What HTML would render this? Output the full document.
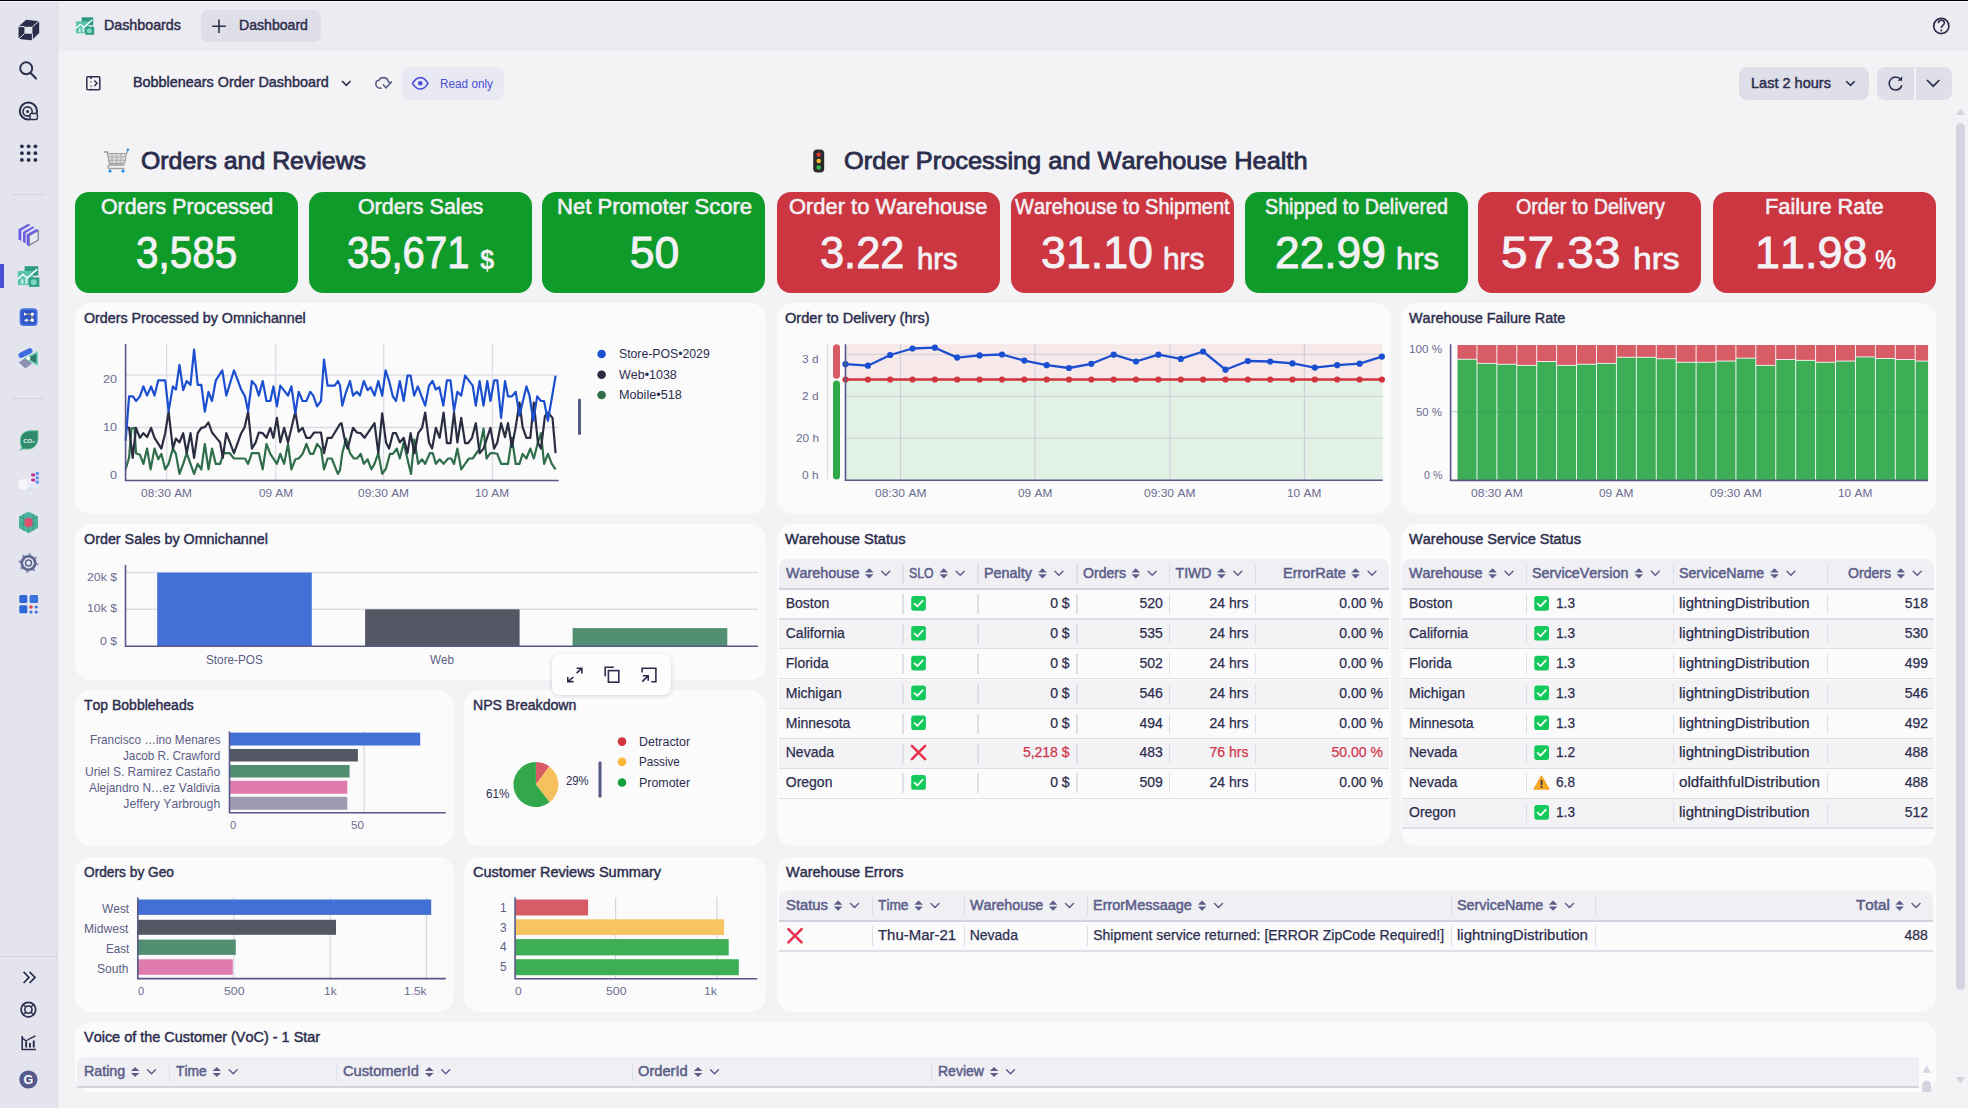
<!DOCTYPE html><html><head><meta charset="utf-8"><style>
html,body{margin:0;padding:0;width:1968px;height:1108px;overflow:hidden;background:#f3f3f6;font-family:"Liberation Sans",sans-serif;font-kerning:none;}
.t{position:absolute;white-space:nowrap;}
.b{position:absolute;}
svg.b{overflow:visible;}
</style></head><body>
<div class="b" style="left:0px;top:0px;width:57px;height:1108px;background:#e4e4ee;"></div>
<div class="b" style="left:57px;top:0px;width:1px;height:1108px;background:#d9d9e4;"></div>
<div class="b" style="left:58px;top:0px;width:1910px;height:51px;background:#ecebf1;"></div>
<div class="b" style="left:0px;top:0px;width:1968px;height:1px;background:#000;"></div>
<div class="b" style="left:0px;top:1px;width:1968px;height:1px;background:#f4f4f8;"></div>
<div class="b" style="left:12px;top:194px;width:33px;height:1px;background:#d3d3de;"></div>
<div class="b" style="left:12px;top:398px;width:33px;height:1px;background:#d3d3de;"></div>
<div class="b" style="left:0px;top:956px;width:57px;height:1px;background:#d3d3de;"></div>
<div class="b" style="left:0px;top:264px;width:4px;height:24px;background:#4b4fd8;"></div>
<div class="t" style="left:132.50px;top:75.43px;font-size:14.2px;line-height:14.2px;font-weight:400;color:#2c2d4d;transform:scaleX(1.0135);transform-origin:0 0;-webkit-text-stroke:0.45px #2c2d4d;">Bobblenears Order Dashboard</div>
<div class="t" style="left:104.00px;top:18.23px;font-size:14.2px;line-height:14.2px;font-weight:400;color:#2c2d4d;transform:scaleX(1.0056);transform-origin:0 0;-webkit-text-stroke:0.45px #2c2d4d;">Dashboards</div>
<div class="b" style="left:201px;top:10px;width:120px;height:32px;background:#dfdfe9;border-radius:7px;"></div>
<div class="t" style="left:239.00px;top:18.23px;font-size:14.2px;line-height:14.2px;font-weight:400;color:#2c2d4d;transform:scaleX(0.9933);transform-origin:0 0;-webkit-text-stroke:0.45px #2c2d4d;">Dashboard</div>
<div class="b" style="left:402px;top:67px;width:102px;height:33px;background:#e9e9f4;border-radius:8px;"></div>
<div class="t" style="left:439.70px;top:78.08px;font-size:12.5px;line-height:12.5px;font-weight:400;color:#4a4fd6;transform:scaleX(0.9416);transform-origin:0 0;">Read only</div>
<div class="b" style="left:1739px;top:67px;width:130px;height:33px;background:#dfdfe9;border-radius:8px;"></div>
<div class="t" style="left:1751.00px;top:75.93px;font-size:14.2px;line-height:14.2px;font-weight:400;color:#2c2d4d;transform:scaleX(1.0237);transform-origin:0 0;-webkit-text-stroke:0.45px #2c2d4d;">Last 2 hours</div>
<div class="b" style="left:1877px;top:67px;width:75px;height:33px;background:#dfdfe9;border-radius:8px;"></div>
<div class="b" style="left:1914px;top:67px;width:1.5px;height:33px;background:#f3f3f6;"></div>
<div class="t" style="left:141.00px;top:148.68px;font-size:24.5px;line-height:24.5px;font-weight:400;color:#2c2d4d;transform:scaleX(1.0138);transform-origin:0 0;-webkit-text-stroke:0.85px #2c2d4d;">Orders and Reviews</div>
<div class="t" style="left:843.60px;top:148.68px;font-size:24.5px;line-height:24.5px;font-weight:400;color:#2c2d4d;transform:scaleX(1.0345);transform-origin:0 0;-webkit-text-stroke:0.85px #2c2d4d;">Order Processing and Warehouse Health</div>
<div class="b" style="left:1956px;top:123px;width:9px;height:867px;background:#d5d5e1;border-radius:5px;"></div>
<div class="b" style="left:75px;top:192px;width:223px;height:101px;background:#0f9b2a;border-radius:14px;"></div>
<div class="t" style="left:100.70px;top:196.62px;font-size:21.5px;line-height:21.5px;font-weight:400;color:#f4f1f6;transform:scaleX(0.9939);transform-origin:0 0;-webkit-text-stroke:0.55px #f4f1f6;">Orders Processed</div>
<div class="t" style="left:136.20px;top:231.29px;font-size:44.6px;line-height:44.6px;font-weight:400;color:#f4f1f6;transform:scaleX(0.9067);transform-origin:0 0;-webkit-text-stroke:0.9px #f4f1f6;">3,585</div>
<div class="b" style="left:309px;top:192px;width:223px;height:101px;background:#0f9b2a;border-radius:14px;"></div>
<div class="t" style="left:357.90px;top:196.62px;font-size:21.5px;line-height:21.5px;font-weight:400;color:#f4f1f6;-webkit-text-stroke:0.55px #f4f1f6;">Orders Sales</div>
<div class="t" style="left:347.30px;top:231.29px;font-size:44.6px;line-height:44.6px;font-weight:400;color:#f4f1f6;transform:scaleX(0.8973);transform-origin:0 0;-webkit-text-stroke:0.9px #f4f1f6;">35,671</div>
<div class="t" style="left:479.70px;top:245.70px;font-size:28px;line-height:28px;font-weight:700;color:#f4f1f6;transform:scaleX(0.9183);transform-origin:0 0;">$</div>
<div class="b" style="left:542px;top:192px;width:223px;height:101px;background:#0f9b2a;border-radius:14px;"></div>
<div class="t" style="left:556.60px;top:196.62px;font-size:21.5px;line-height:21.5px;font-weight:400;color:#f4f1f6;transform:scaleX(1.0269);transform-origin:0 0;-webkit-text-stroke:0.55px #f4f1f6;">Net Promoter Score</div>
<div class="t" style="left:629.80px;top:231.29px;font-size:44.6px;line-height:44.6px;font-weight:400;color:#f4f1f6;-webkit-text-stroke:0.9px #f4f1f6;">50</div>
<div class="b" style="left:777px;top:192px;width:223px;height:101px;background:#cc3640;border-radius:14px;"></div>
<div class="t" style="left:789.40px;top:196.62px;font-size:21.5px;line-height:21.5px;font-weight:400;color:#f4f1f6;transform:scaleX(1.0186);transform-origin:0 0;-webkit-text-stroke:0.55px #f4f1f6;">Order to Warehouse</div>
<div class="t" style="left:820.00px;top:231.29px;font-size:44.6px;line-height:44.6px;font-weight:400;color:#f4f1f6;transform:scaleX(0.9723);transform-origin:0 0;-webkit-text-stroke:0.9px #f4f1f6;">3.22</div>
<div class="t" style="left:916.60px;top:244.00px;font-size:30px;line-height:30px;font-weight:400;color:#f4f1f6;transform:scaleX(0.9742);transform-origin:0 0;-webkit-text-stroke:0.8px #f4f1f6;">hrs</div>
<div class="b" style="left:1011px;top:192px;width:223px;height:101px;background:#cc3640;border-radius:14px;"></div>
<div class="t" style="left:1015.40px;top:196.62px;font-size:21.5px;line-height:21.5px;font-weight:400;color:#f4f1f6;transform:scaleX(0.9304);transform-origin:0 0;-webkit-text-stroke:0.55px #f4f1f6;">Warehouse to Shipment</div>
<div class="t" style="left:1041.00px;top:231.29px;font-size:44.6px;line-height:44.6px;font-weight:400;color:#f4f1f6;transform:scaleX(1.0035);transform-origin:0 0;-webkit-text-stroke:0.9px #f4f1f6;">31.10</div>
<div class="t" style="left:1163.00px;top:244.00px;font-size:30px;line-height:30px;font-weight:400;color:#f4f1f6;transform:scaleX(0.9934);transform-origin:0 0;-webkit-text-stroke:0.8px #f4f1f6;">hrs</div>
<div class="b" style="left:1245px;top:192px;width:223px;height:101px;background:#0f9b2a;border-radius:14px;"></div>
<div class="t" style="left:1264.90px;top:196.62px;font-size:21.5px;line-height:21.5px;font-weight:400;color:#f4f1f6;transform:scaleX(0.9163);transform-origin:0 0;-webkit-text-stroke:0.55px #f4f1f6;">Shipped to Delivered</div>
<div class="t" style="left:1275.40px;top:231.29px;font-size:44.6px;line-height:44.6px;font-weight:400;color:#f4f1f6;transform:scaleX(0.9936);transform-origin:0 0;-webkit-text-stroke:0.9px #f4f1f6;">22.99</div>
<div class="t" style="left:1396.00px;top:244.00px;font-size:30px;line-height:30px;font-weight:400;color:#f4f1f6;transform:scaleX(1.0270);transform-origin:0 0;-webkit-text-stroke:0.8px #f4f1f6;">hrs</div>
<div class="b" style="left:1478px;top:192px;width:223px;height:101px;background:#cc3640;border-radius:14px;"></div>
<div class="t" style="left:1515.60px;top:196.62px;font-size:21.5px;line-height:21.5px;font-weight:400;color:#f4f1f6;transform:scaleX(0.9158);transform-origin:0 0;-webkit-text-stroke:0.55px #f4f1f6;">Order to Delivery</div>
<div class="t" style="left:1501.00px;top:231.29px;font-size:44.6px;line-height:44.6px;font-weight:400;color:#f4f1f6;transform:scaleX(1.0707);transform-origin:0 0;-webkit-text-stroke:0.9px #f4f1f6;">57.33</div>
<div class="t" style="left:1632.70px;top:244.00px;font-size:30px;line-height:30px;font-weight:400;color:#f4f1f6;transform:scaleX(1.1182);transform-origin:0 0;-webkit-text-stroke:0.8px #f4f1f6;">hrs</div>
<div class="b" style="left:1713px;top:192px;width:223px;height:101px;background:#cc3640;border-radius:14px;"></div>
<div class="t" style="left:1765.40px;top:196.62px;font-size:21.5px;line-height:21.5px;font-weight:400;color:#f4f1f6;transform:scaleX(1.0128);transform-origin:0 0;-webkit-text-stroke:0.55px #f4f1f6;">Failure Rate</div>
<div class="t" style="left:1754.60px;top:231.29px;font-size:44.6px;line-height:44.6px;font-weight:400;color:#f4f1f6;transform:scaleX(1.0071);transform-origin:0 0;-webkit-text-stroke:0.9px #f4f1f6;">11.98</div>
<div class="t" style="left:1875.00px;top:245.70px;font-size:28px;line-height:28px;font-weight:700;color:#f4f1f6;transform:scaleX(0.8435);transform-origin:0 0;">%</div>
<div class="b" style="left:75px;top:303px;width:691px;height:211px;background:#fbfbfc;border-radius:16px;"></div>
<div class="t" style="left:83.80px;top:311.77px;font-size:13.8px;line-height:13.8px;font-weight:400;color:#2c2d4d;transform:scaleX(1.0328);transform-origin:0 0;-webkit-text-stroke:0.42px #2c2d4d;">Orders Processed by Omnichannel</div>
<div class="b" style="left:777px;top:303px;width:614px;height:211px;background:#fbfbfc;border-radius:16px;"></div>
<div class="t" style="left:785.40px;top:311.77px;font-size:13.8px;line-height:13.8px;font-weight:400;color:#2c2d4d;transform:scaleX(1.0594);transform-origin:0 0;-webkit-text-stroke:0.42px #2c2d4d;">Order to Delivery (hrs)</div>
<div class="b" style="left:1401px;top:303px;width:535px;height:211px;background:#fbfbfc;border-radius:16px;"></div>
<div class="t" style="left:1409.00px;top:311.77px;font-size:13.8px;line-height:13.8px;font-weight:400;color:#2c2d4d;transform:scaleX(1.0450);transform-origin:0 0;-webkit-text-stroke:0.42px #2c2d4d;">Warehouse Failure Rate</div>
<div class="b" style="left:75px;top:524px;width:691px;height:156px;background:#fbfbfc;border-radius:16px;"></div>
<div class="t" style="left:83.80px;top:532.77px;font-size:13.8px;line-height:13.8px;font-weight:400;color:#2c2d4d;transform:scaleX(1.0385);transform-origin:0 0;-webkit-text-stroke:0.42px #2c2d4d;">Order Sales by Omnichannel</div>
<div class="b" style="left:777px;top:524px;width:614px;height:322px;background:#fbfbfc;border-radius:16px;"></div>
<div class="t" style="left:785.40px;top:532.77px;font-size:13.8px;line-height:13.8px;font-weight:400;color:#2c2d4d;transform:scaleX(1.0623);transform-origin:0 0;-webkit-text-stroke:0.42px #2c2d4d;">Warehouse Status</div>
<div class="b" style="left:1401px;top:524px;width:535px;height:322px;background:#fbfbfc;border-radius:16px;"></div>
<div class="t" style="left:1409.00px;top:532.77px;font-size:13.8px;line-height:13.8px;font-weight:400;color:#2c2d4d;transform:scaleX(1.0528);transform-origin:0 0;-webkit-text-stroke:0.42px #2c2d4d;">Warehouse Service Status</div>
<div class="b" style="left:75px;top:690px;width:379px;height:156px;background:#fbfbfc;border-radius:16px;"></div>
<div class="t" style="left:83.80px;top:698.77px;font-size:13.8px;line-height:13.8px;font-weight:400;color:#2c2d4d;transform:scaleX(1.0140);transform-origin:0 0;-webkit-text-stroke:0.42px #2c2d4d;">Top Bobbleheads</div>
<div class="b" style="left:464px;top:690px;width:302px;height:156px;background:#fbfbfc;border-radius:16px;"></div>
<div class="t" style="left:472.70px;top:698.77px;font-size:13.8px;line-height:13.8px;font-weight:400;color:#2c2d4d;transform:scaleX(1.0203);transform-origin:0 0;-webkit-text-stroke:0.42px #2c2d4d;">NPS Breakdown</div>
<div class="b" style="left:75px;top:857px;width:379px;height:155px;background:#fbfbfc;border-radius:16px;"></div>
<div class="t" style="left:83.80px;top:865.77px;font-size:13.8px;line-height:13.8px;font-weight:400;color:#2c2d4d;transform:scaleX(0.9945);transform-origin:0 0;-webkit-text-stroke:0.42px #2c2d4d;">Orders by Geo</div>
<div class="b" style="left:464px;top:857px;width:302px;height:155px;background:#fbfbfc;border-radius:16px;"></div>
<div class="t" style="left:472.70px;top:865.77px;font-size:13.8px;line-height:13.8px;font-weight:400;color:#2c2d4d;transform:scaleX(1.0528);transform-origin:0 0;-webkit-text-stroke:0.42px #2c2d4d;">Customer Reviews Summary</div>
<div class="b" style="left:777px;top:857px;width:1159px;height:155px;background:#fbfbfc;border-radius:16px;"></div>
<div class="t" style="left:785.90px;top:865.77px;font-size:13.8px;line-height:13.8px;font-weight:400;color:#2c2d4d;transform:scaleX(1.0503);transform-origin:0 0;-webkit-text-stroke:0.42px #2c2d4d;">Warehouse Errors</div>
<div class="b" style="left:75px;top:1022px;width:1861px;height:70px;background:#fbfbfc;border-radius:16px;"></div>
<div class="t" style="left:83.80px;top:1030.77px;font-size:13.8px;line-height:13.8px;font-weight:400;color:#2c2d4d;transform:scaleX(1.0475);transform-origin:0 0;-webkit-text-stroke:0.42px #2c2d4d;">Voice of the Customer (VoC) - 1 Star</div>
<svg class="b" style="left:0px;top:0px;pointer-events:none" width="1968" height="1108" viewBox="0 0 1968 1108"><line x1="125.6" y1="375.2" x2="558.7" y2="375.2" stroke="#dcdce7" stroke-width="1.3"/><line x1="125.6" y1="427.5" x2="558.7" y2="427.5" stroke="#dcdce7" stroke-width="1.3"/><line x1="166.7" y1="344" x2="166.7" y2="480.5" stroke="#dcdce7" stroke-width="1.3"/><line x1="275.7" y1="344" x2="275.7" y2="480.5" stroke="#dcdce7" stroke-width="1.3"/><line x1="383.7" y1="344" x2="383.7" y2="480.5" stroke="#dcdce7" stroke-width="1.3"/><line x1="492.4" y1="344" x2="492.4" y2="480.5" stroke="#dcdce7" stroke-width="1.3"/><polyline points="125.6,469.3 129.1,457.8 131.4,428.6 134.5,427.8 136.0,453.2 139.9,454.7 143.4,463.9 147.1,448.6 150.6,469.3 154.5,448.6 158.3,459.3 161.4,453.9 165.2,469.3 168.6,463.9 172.9,448.6 175.9,453.9 179.5,473.9 183.2,463.9 186.7,453.2 190.5,463.9 194.1,473.9 197.7,463.9 201.3,469.3 204.8,444.0 208.5,469.3 212.0,448.6 215.8,463.9 220.1,463.9 223.5,453.2 229.7,453.2 234.0,458.5 245.0,458.5 248.1,463.9 251.9,453.2 258.8,453.2 262.7,469.3 266.5,444.0 270.3,453.9 276.9,463.9 280.3,453.9 284.1,463.9 288.0,444.0 291.4,469.3 295.3,459.3 298.7,458.5 302.6,453.9 306.4,444.0 310.2,453.9 313.3,453.9 317.1,444.0 321.0,448.6 324.0,469.3 327.6,458.5 331.7,458.5 337.9,473.9 340.0,470.1 342.3,453.2 346.1,438.6 350.0,453.2 353.8,458.5 356.9,458.5 360.7,453.9 363.8,463.9 367.6,459.3 371.4,469.3 374.5,463.9 378.3,453.2 382.2,473.9 386.0,468.5 389.9,453.9 392.9,453.9 396.8,448.6 399.8,458.5 403.7,442.4 407.5,459.3 411.0,473.9 414.4,439.4 418.2,463.9 422.1,459.3 425.2,463.9 429.8,453.2 432.8,453.2 435.9,463.9 439.7,459.3 443.6,463.9 448.2,458.5 451.2,458.5 454.0,463.9 457.4,448.6 461.2,469.3 465.1,463.9 468.9,458.5 472.7,458.5 479.6,448.6 483.5,428.6 486.5,458.5 490.4,453.2 494.2,453.2 497.3,453.9 501.1,463.9 505.0,463.9 508.0,463.9 511.9,437.8 515.7,463.9 519.5,463.9 522.6,453.9 526.4,458.5 530.3,448.6 533.8,458.5 537.9,442.4 541.0,433.2 544.1,463.9 547.9,453.9 551.8,463.9 555.6,469.3" fill="none" stroke="#2f6e4a" stroke-width="2.2" stroke-linejoin="round"/><polyline points="125.6,427.1 129.1,427.8 132.7,457.8 136.0,427.8 139.9,437.8 143.4,433.2 147.1,437.1 151.1,427.8 154.5,437.8 161.4,448.6 165.2,433.2 168.6,411.7 172.9,448.6 175.9,438.6 179.5,442.4 183.2,433.2 186.7,453.2 190.5,433.2 194.1,457.8 197.7,433.2 201.3,427.8 204.8,427.1 208.5,422.5 212.0,432.5 215.8,437.1 220.1,442.4 222.8,457.8 226.3,433.2 234.0,453.2 241.2,433.2 244.7,427.1 248.1,411.7 251.9,448.6 255.7,442.4 258.8,432.5 262.7,433.2 266.5,437.8 270.3,427.8 273.4,437.8 276.9,417.9 280.3,442.4 284.1,427.8 288.0,442.4 295.3,411.7 298.7,431.7 302.6,427.8 306.4,437.8 310.2,437.8 314.1,432.5 321.0,432.5 324.0,453.2 327.6,437.8 331.7,437.8 340.0,424.0 341.5,423.2 345.3,442.4 347.6,448.6 353.0,427.8 356.9,432.5 360.7,433.2 364.5,437.8 374.5,423.2 378.3,453.2 382.2,413.3 386.0,442.4 389.1,448.6 392.9,433.2 396.0,433.2 399.8,442.4 403.7,437.8 407.5,453.2 410.6,433.2 414.4,453.2 418.2,433.2 422.1,427.8 425.2,412.5 429.0,442.4 432.1,448.6 435.9,427.8 439.7,437.8 443.6,412.5 446.9,443.2 450.5,443.2 454.0,412.5 457.4,442.4 461.2,417.9 465.1,443.2 468.1,443.2 472.0,437.8 475.8,423.2 479.6,453.2 483.5,448.6 490.4,427.8 494.2,448.6 497.3,442.4 501.1,423.2 505.0,437.1 508.0,423.2 511.9,447.0 515.7,427.1 519.5,402.5 522.6,427.1 526.4,437.8 530.3,437.8 533.8,402.5 537.9,442.4 541.0,448.6 544.9,416.3 547.9,412.5 552.5,417.9 555.6,453.2" fill="none" stroke="#2a2c40" stroke-width="2.2" stroke-linejoin="round"/><polyline points="125.6,440.9 129.1,396.4 133.0,396.4 136.0,401.0 139.9,396.4 143.4,386.4 147.1,395.6 151.1,386.4 154.5,395.6 158.3,380.3 165.2,380.3 168.6,411.0 172.9,386.4 175.9,389.5 179.5,364.9 183.2,390.2 186.7,381.0 190.5,384.9 194.1,349.6 197.7,384.9 201.3,384.9 204.8,411.7 208.5,391.8 212.0,401.0 215.8,380.3 222.3,370.3 226.3,395.6 234.0,370.3 241.2,389.5 245.0,396.4 248.1,411.0 251.9,381.0 255.7,385.6 258.8,395.6 262.7,381.0 266.5,401.0 270.3,401.0 273.4,386.4 276.9,406.4 280.3,385.6 288.0,395.6 291.4,386.4 295.3,413.3 298.7,391.8 302.6,401.0 306.4,401.0 310.2,391.8 313.3,395.6 317.1,406.4 321.0,401.0 324.0,359.6 327.6,385.6 334.8,385.6 337.9,381.0 340.0,385.6 342.3,405.6 346.1,391.8 350.0,381.0 353.0,395.6 356.9,391.8 359.9,395.6 363.8,381.0 367.6,390.2 370.7,387.2 374.5,395.6 378.3,381.0 382.2,395.6 385.6,370.3 389.1,381.0 392.9,396.4 396.0,401.0 399.8,381.0 403.7,401.0 407.5,375.7 410.6,375.7 414.1,395.6 417.8,386.4 425.2,405.6 429.0,385.6 432.5,381.0 435.9,389.5 439.3,387.2 443.3,405.6 446.9,380.3 450.5,380.3 454.0,411.0 457.4,391.8 461.2,395.6 465.1,375.7 472.7,385.6 475.8,405.6 479.6,381.0 483.5,405.6 487.3,381.0 490.4,401.0 494.2,380.3 497.3,380.3 501.1,417.9 505.0,381.0 508.0,396.4 511.9,396.4 515.7,391.8 519.5,415.6 526.4,386.4 529.5,395.6 533.3,420.9 537.2,396.4 541.0,401.0 544.1,401.0 547.9,420.9 555.6,375.7" fill="none" stroke="#1c4fd0" stroke-width="2.2" stroke-linejoin="round"/><path d="M125.6 344 V480.5 H558.7" fill="none" stroke="#565887" stroke-width="1.6"/><rect x="578" y="398.5" width="3" height="36.5" rx="1.5" fill="#555a85"/><circle cx="601.6" cy="354" r="4.3" fill="#1c4fd0"/><circle cx="601.6" cy="374.7" r="4.3" fill="#2a2c40"/><circle cx="601.6" cy="395" r="4.3" fill="#2f6e4a"/></svg>
<div class="t" style="left:103.00px;top:374.23px;font-size:11.5px;line-height:11.5px;font-weight:400;color:#6b6c90;transform:scaleX(1.0945);transform-origin:0 0;">20</div>
<div class="t" style="left:103.00px;top:422.23px;font-size:11.5px;line-height:11.5px;font-weight:400;color:#6b6c90;transform:scaleX(1.0945);transform-origin:0 0;">10</div>
<div class="t" style="left:110.00px;top:470.23px;font-size:11.5px;line-height:11.5px;font-weight:400;color:#6b6c90;transform:scaleX(1.0945);transform-origin:0 0;">0</div>
<div class="t" style="left:141.20px;top:487.62px;font-size:11.5px;line-height:11.5px;font-weight:400;color:#6b6c90;transform:scaleX(1.0361);transform-origin:0 0;">08:30 AM</div>
<div class="t" style="left:258.70px;top:487.62px;font-size:11.5px;line-height:11.5px;font-weight:400;color:#6b6c90;transform:scaleX(1.0230);transform-origin:0 0;">09 AM</div>
<div class="t" style="left:358.20px;top:487.62px;font-size:11.5px;line-height:11.5px;font-weight:400;color:#6b6c90;transform:scaleX(1.0361);transform-origin:0 0;">09:30 AM</div>
<div class="t" style="left:475.40px;top:487.62px;font-size:11.5px;line-height:11.5px;font-weight:400;color:#6b6c90;transform:scaleX(1.0230);transform-origin:0 0;">10 AM</div>
<div class="t" style="left:618.70px;top:348.10px;font-size:12px;line-height:12px;font-weight:400;color:#2c2d4d;transform:scaleX(1.0201);transform-origin:0 0;">Store-POS•2029</div>
<div class="t" style="left:619.00px;top:368.60px;font-size:12px;line-height:12px;font-weight:400;color:#2c2d4d;transform:scaleX(1.0401);transform-origin:0 0;">Web•1038</div>
<div class="t" style="left:619.00px;top:389.10px;font-size:12px;line-height:12px;font-weight:400;color:#2c2d4d;transform:scaleX(1.0525);transform-origin:0 0;">Mobile•518</div>
<svg class="b" style="left:0px;top:0px;" width="1968" height="1108" viewBox="0 0 1968 1108"><rect x="845.5" y="344.2" width="537.2" height="35.30000000000001" fill="#f7e8ea"/><rect x="845.5" y="379.5" width="537.2" height="100.80000000000001" fill="#e2f1e5"/><line x1="845.5" y1="354.3" x2="1382.7" y2="354.3" stroke="#d3d3de" stroke-width="1.2"/><line x1="845.5" y1="396.3" x2="1382.7" y2="396.3" stroke="#d3d3de" stroke-width="1.2"/><line x1="845.5" y1="438.2" x2="1382.7" y2="438.2" stroke="#d3d3de" stroke-width="1.2"/><line x1="900.5" y1="344.2" x2="900.5" y2="480.3" stroke="#cfcfdc" stroke-width="1.2"/><line x1="1035" y1="344.2" x2="1035" y2="480.3" stroke="#cfcfdc" stroke-width="1.2"/><line x1="1170" y1="344.2" x2="1170" y2="480.3" stroke="#cfcfdc" stroke-width="1.2"/><line x1="1304.4" y1="344.2" x2="1304.4" y2="480.3" stroke="#cfcfdc" stroke-width="1.2"/><line x1="827.6" y1="344.2" x2="827.6" y2="479.5" stroke="#dcdce6" stroke-width="1.2"/><rect x="833" y="344.2" width="7" height="34.5" rx="3.5" fill="#d75c66"/><rect x="833" y="380.6" width="7" height="98.8" rx="3.5" fill="#2fa84a"/><line x1="845.5" y1="379.5" x2="1382.7" y2="379.5" stroke="#d0353f" stroke-width="2.3"/><circle cx="845.5" cy="379.5" r="3.1" fill="#d0353f"/><circle cx="867.9" cy="379.5" r="3.1" fill="#d0353f"/><circle cx="890.2" cy="379.5" r="3.1" fill="#d0353f"/><circle cx="912.5" cy="379.5" r="3.1" fill="#d0353f"/><circle cx="934.9" cy="379.5" r="3.1" fill="#d0353f"/><circle cx="957.2" cy="379.5" r="3.1" fill="#d0353f"/><circle cx="979.6" cy="379.5" r="3.1" fill="#d0353f"/><circle cx="1002.0" cy="379.5" r="3.1" fill="#d0353f"/><circle cx="1024.3" cy="379.5" r="3.1" fill="#d0353f"/><circle cx="1046.7" cy="379.5" r="3.1" fill="#d0353f"/><circle cx="1069.0" cy="379.5" r="3.1" fill="#d0353f"/><circle cx="1091.3" cy="379.5" r="3.1" fill="#d0353f"/><circle cx="1113.7" cy="379.5" r="3.1" fill="#d0353f"/><circle cx="1136.0" cy="379.5" r="3.1" fill="#d0353f"/><circle cx="1158.4" cy="379.5" r="3.1" fill="#d0353f"/><circle cx="1180.8" cy="379.5" r="3.1" fill="#d0353f"/><circle cx="1203.1" cy="379.5" r="3.1" fill="#d0353f"/><circle cx="1225.5" cy="379.5" r="3.1" fill="#d0353f"/><circle cx="1247.8" cy="379.5" r="3.1" fill="#d0353f"/><circle cx="1270.2" cy="379.5" r="3.1" fill="#d0353f"/><circle cx="1292.5" cy="379.5" r="3.1" fill="#d0353f"/><circle cx="1314.8" cy="379.5" r="3.1" fill="#d0353f"/><circle cx="1337.2" cy="379.5" r="3.1" fill="#d0353f"/><circle cx="1359.6" cy="379.5" r="3.1" fill="#d0353f"/><circle cx="1381.9" cy="379.5" r="3.1" fill="#d0353f"/><polyline points="845.5,364.2 867.9,365.7 890.2,355 912.5,348.5 934.9,347.7 957.2,357.6 979.6,355.4 1002.0,354.5 1024.3,360.6 1046.7,365.2 1069.0,368 1091.3,363.8 1113.7,354.7 1136.0,361.5 1158.4,354.7 1180.8,358.9 1203.1,351.5 1225.5,369.7 1247.8,361 1270.2,361.5 1292.5,363.4 1314.8,367.6 1337.2,365.2 1359.6,363.7 1381.9,356.6" fill="none" stroke="#1c4fd0" stroke-width="2.3" stroke-linejoin="round"/><circle cx="845.5" cy="364.2" r="3.1" fill="#1c4fd0"/><circle cx="867.9" cy="365.7" r="3.1" fill="#1c4fd0"/><circle cx="890.2" cy="355" r="3.1" fill="#1c4fd0"/><circle cx="912.5" cy="348.5" r="3.1" fill="#1c4fd0"/><circle cx="934.9" cy="347.7" r="3.1" fill="#1c4fd0"/><circle cx="957.2" cy="357.6" r="3.1" fill="#1c4fd0"/><circle cx="979.6" cy="355.4" r="3.1" fill="#1c4fd0"/><circle cx="1002.0" cy="354.5" r="3.1" fill="#1c4fd0"/><circle cx="1024.3" cy="360.6" r="3.1" fill="#1c4fd0"/><circle cx="1046.7" cy="365.2" r="3.1" fill="#1c4fd0"/><circle cx="1069.0" cy="368" r="3.1" fill="#1c4fd0"/><circle cx="1091.3" cy="363.8" r="3.1" fill="#1c4fd0"/><circle cx="1113.7" cy="354.7" r="3.1" fill="#1c4fd0"/><circle cx="1136.0" cy="361.5" r="3.1" fill="#1c4fd0"/><circle cx="1158.4" cy="354.7" r="3.1" fill="#1c4fd0"/><circle cx="1180.8" cy="358.9" r="3.1" fill="#1c4fd0"/><circle cx="1203.1" cy="351.5" r="3.1" fill="#1c4fd0"/><circle cx="1225.5" cy="369.7" r="3.1" fill="#1c4fd0"/><circle cx="1247.8" cy="361" r="3.1" fill="#1c4fd0"/><circle cx="1270.2" cy="361.5" r="3.1" fill="#1c4fd0"/><circle cx="1292.5" cy="363.4" r="3.1" fill="#1c4fd0"/><circle cx="1314.8" cy="367.6" r="3.1" fill="#1c4fd0"/><circle cx="1337.2" cy="365.2" r="3.1" fill="#1c4fd0"/><circle cx="1359.6" cy="363.7" r="3.1" fill="#1c4fd0"/><circle cx="1381.9" cy="356.6" r="3.1" fill="#1c4fd0"/><path d="M845.5 344.2 V480.3 H1382.7" fill="none" stroke="#565887" stroke-width="1.6"/></svg>
<div class="t" style="left:802.30px;top:353.53px;font-size:11.5px;line-height:11.5px;font-weight:400;color:#6b6c90;transform:scaleX(1.0321);transform-origin:0 0;">3 d</div>
<div class="t" style="left:802.30px;top:390.83px;font-size:11.5px;line-height:11.5px;font-weight:400;color:#6b6c90;transform:scaleX(1.0321);transform-origin:0 0;">2 d</div>
<div class="t" style="left:795.80px;top:432.73px;font-size:11.5px;line-height:11.5px;font-weight:400;color:#6b6c90;transform:scaleX(1.0276);transform-origin:0 0;">20 h</div>
<div class="t" style="left:802.30px;top:470.43px;font-size:11.5px;line-height:11.5px;font-weight:400;color:#6b6c90;transform:scaleX(1.0321);transform-origin:0 0;">0 h</div>
<div class="t" style="left:874.80px;top:487.53px;font-size:11.5px;line-height:11.5px;font-weight:400;color:#6b6c90;transform:scaleX(1.0442);transform-origin:0 0;">08:30 AM</div>
<div class="t" style="left:1017.85px;top:487.53px;font-size:11.5px;line-height:11.5px;font-weight:400;color:#6b6c90;transform:scaleX(1.0320);transform-origin:0 0;">09 AM</div>
<div class="t" style="left:1144.30px;top:487.53px;font-size:11.5px;line-height:11.5px;font-weight:400;color:#6b6c90;transform:scaleX(1.0442);transform-origin:0 0;">09:30 AM</div>
<div class="t" style="left:1287.25px;top:487.53px;font-size:11.5px;line-height:11.5px;font-weight:400;color:#6b6c90;transform:scaleX(1.0320);transform-origin:0 0;">10 AM</div>
<svg class="b" style="left:0px;top:0px;" width="1968" height="1108" viewBox="0 0 1968 1108"><rect x="1457.50" y="345" width="19.00" height="13.80" fill="#d75c66"/><rect x="1457.50" y="359.70" width="19.00" height="120.30" fill="#3dae55"/><rect x="1477.42" y="345" width="19.00" height="17.90" fill="#d75c66"/><rect x="1477.42" y="363.80" width="19.00" height="116.20" fill="#3dae55"/><rect x="1497.34" y="345" width="19.00" height="18.80" fill="#d75c66"/><rect x="1497.34" y="364.70" width="19.00" height="115.30" fill="#3dae55"/><rect x="1517.26" y="345" width="19.00" height="19.90" fill="#d75c66"/><rect x="1517.26" y="365.80" width="19.00" height="114.20" fill="#3dae55"/><rect x="1537.18" y="345" width="19.00" height="16.10" fill="#d75c66"/><rect x="1537.18" y="362.00" width="19.00" height="118.00" fill="#3dae55"/><rect x="1557.10" y="345" width="19.00" height="19.90" fill="#d75c66"/><rect x="1557.10" y="365.80" width="19.00" height="114.20" fill="#3dae55"/><rect x="1577.02" y="345" width="19.00" height="18.80" fill="#d75c66"/><rect x="1577.02" y="364.70" width="19.00" height="115.30" fill="#3dae55"/><rect x="1596.94" y="345" width="19.00" height="17.90" fill="#d75c66"/><rect x="1596.94" y="363.80" width="19.00" height="116.20" fill="#3dae55"/><rect x="1616.86" y="345" width="19.00" height="11.80" fill="#d75c66"/><rect x="1616.86" y="357.70" width="19.00" height="122.30" fill="#3dae55"/><rect x="1636.78" y="345" width="19.00" height="11.80" fill="#d75c66"/><rect x="1636.78" y="357.70" width="19.00" height="122.30" fill="#3dae55"/><rect x="1656.70" y="345" width="19.00" height="13.30" fill="#d75c66"/><rect x="1656.70" y="359.20" width="19.00" height="120.80" fill="#3dae55"/><rect x="1676.62" y="345" width="19.00" height="16.80" fill="#d75c66"/><rect x="1676.62" y="362.70" width="19.00" height="117.30" fill="#3dae55"/><rect x="1696.54" y="345" width="19.00" height="16.80" fill="#d75c66"/><rect x="1696.54" y="362.70" width="19.00" height="117.30" fill="#3dae55"/><rect x="1716.46" y="345" width="19.00" height="15.60" fill="#d75c66"/><rect x="1716.46" y="361.50" width="19.00" height="118.50" fill="#3dae55"/><rect x="1736.38" y="345" width="19.00" height="12.70" fill="#d75c66"/><rect x="1736.38" y="358.60" width="19.00" height="121.40" fill="#3dae55"/><rect x="1756.30" y="345" width="19.00" height="19.90" fill="#d75c66"/><rect x="1756.30" y="365.80" width="19.00" height="114.20" fill="#3dae55"/><rect x="1776.22" y="345" width="19.00" height="14.10" fill="#d75c66"/><rect x="1776.22" y="360.00" width="19.00" height="120.00" fill="#3dae55"/><rect x="1796.14" y="345" width="19.00" height="14.90" fill="#d75c66"/><rect x="1796.14" y="360.80" width="19.00" height="119.20" fill="#3dae55"/><rect x="1816.06" y="345" width="19.00" height="16.80" fill="#d75c66"/><rect x="1816.06" y="362.70" width="19.00" height="117.30" fill="#3dae55"/><rect x="1835.98" y="345" width="19.00" height="15.60" fill="#d75c66"/><rect x="1835.98" y="361.50" width="19.00" height="118.50" fill="#3dae55"/><rect x="1855.90" y="345" width="19.00" height="11.50" fill="#d75c66"/><rect x="1855.90" y="357.40" width="19.00" height="122.60" fill="#3dae55"/><rect x="1875.82" y="345" width="19.00" height="13.00" fill="#d75c66"/><rect x="1875.82" y="358.90" width="19.00" height="121.10" fill="#3dae55"/><rect x="1895.74" y="345" width="19.00" height="14.10" fill="#d75c66"/><rect x="1895.74" y="360.00" width="19.00" height="120.00" fill="#3dae55"/><rect x="1915.66" y="345" width="12.44" height="15.60" fill="#d75c66"/><rect x="1915.66" y="361.50" width="12.44" height="118.50" fill="#3dae55"/><line x1="1450.6" y1="411.7" x2="1928.1" y2="411.7" stroke="#2e8c44" stroke-opacity="0.35" stroke-width="1"/><path d="M1450.6 344.2 V480.4 H1928.1" fill="none" stroke="#565887" stroke-width="1.6"/></svg>
<div class="t" style="left:1409.20px;top:343.62px;font-size:11.5px;line-height:11.5px;font-weight:400;color:#6b6c90;transform:scaleX(1.0120);transform-origin:0 0;">100 %</div>
<div class="t" style="left:1416.20px;top:407.23px;font-size:11.5px;line-height:11.5px;font-weight:400;color:#6b6c90;transform:scaleX(0.9919);transform-origin:0 0;">50 %</div>
<div class="t" style="left:1423.80px;top:470.23px;font-size:11.5px;line-height:11.5px;font-weight:400;color:#6b6c90;transform:scaleX(0.9285);transform-origin:0 0;">0 %</div>
<div class="t" style="left:1470.65px;top:487.53px;font-size:11.5px;line-height:11.5px;font-weight:400;color:#6b6c90;transform:scaleX(1.0503);transform-origin:0 0;">08:30 AM</div>
<div class="t" style="left:1598.80px;top:487.53px;font-size:11.5px;line-height:11.5px;font-weight:400;color:#6b6c90;transform:scaleX(1.0350);transform-origin:0 0;">09 AM</div>
<div class="t" style="left:1709.65px;top:487.53px;font-size:11.5px;line-height:11.5px;font-weight:400;color:#6b6c90;transform:scaleX(1.0503);transform-origin:0 0;">09:30 AM</div>
<div class="t" style="left:1837.80px;top:487.53px;font-size:11.5px;line-height:11.5px;font-weight:400;color:#6b6c90;transform:scaleX(1.0350);transform-origin:0 0;">10 AM</div>
<svg class="b" style="left:0px;top:0px;" width="1968" height="1108" viewBox="0 0 1968 1108"><line x1="125.5" y1="572.5" x2="758" y2="572.5" stroke="#dcdce7" stroke-width="1.4"/><line x1="125.5" y1="609.3" x2="758" y2="609.3" stroke="#dcdce7" stroke-width="1.4"/><rect x="157.2" y="572.6" width="154.6" height="73.6" fill="#4270d5"/><rect x="365.1" y="609.3" width="154.5" height="36.9" fill="#545865"/><rect x="572.6" y="628.1" width="154.7" height="18.1" fill="#528f72"/><path d="M125.5 565 V646.3 H758" fill="none" stroke="#565887" stroke-width="1.6"/><line x1="364.2" y1="731.6" x2="364.2" y2="812.7" stroke="#d6d6e2" stroke-width="1.2"/><rect x="229.5" y="732.6" width="190.7" height="12.9" fill="#4270d5"/><rect x="229.5" y="749" width="128.4" height="12.5" fill="#545865"/><rect x="229.5" y="765" width="120.1" height="12.5" fill="#528f72"/><rect x="229.5" y="780.8" width="117.8" height="13.0" fill="#e07bb0"/><rect x="229.5" y="796.8" width="117.8" height="13.0" fill="#9e9cb0"/><path d="M229.5 731.6 V812.7 H445.7" fill="none" stroke="#565887" stroke-width="1.6"/><path d="M535.9 784.5 L535.90 762.00 A22.5 22.5 0 0 1 549.35 766.46 Z" fill="#d75c66"/><path d="M535.9 784.5 L549.35 766.46 A22.5 22.5 0 0 1 549.63 802.33 Z" fill="#f6c15c"/><path d="M535.9 784.5 L549.63 802.33 A22.5 22.5 0 1 1 535.90 762.00 Z" fill="#33a84a"/><rect x="598.5" y="761.2" width="3" height="36.5" rx="1.5" fill="#555a85"/><circle cx="622" cy="741.6" r="4.3" fill="#d0353f"/><circle cx="622" cy="761.9" r="4.3" fill="#f6b73c"/><circle cx="622" cy="782.5" r="4.3" fill="#14a03a"/><line x1="233.9" y1="897.6" x2="233.9" y2="978.6" stroke="#d6d6e2" stroke-width="1.2"/><line x1="330.3" y1="897.6" x2="330.3" y2="978.6" stroke="#d6d6e2" stroke-width="1.2"/><line x1="426.4" y1="897.6" x2="426.4" y2="978.6" stroke="#d6d6e2" stroke-width="1.2"/><rect x="137.8" y="899.5" width="293.4" height="15.4" fill="#4270d5"/><rect x="137.8" y="919.8" width="198.2" height="15.0" fill="#545865"/><rect x="137.8" y="939.6" width="98.0" height="15.3" fill="#528f72"/><rect x="137.8" y="959.3" width="95.0" height="15.5" fill="#e07bb0"/><path d="M137.8 897.6 V978.6 H445.7" fill="none" stroke="#565887" stroke-width="1.6"/><line x1="615.6" y1="897.2" x2="615.6" y2="978.7" stroke="#d6d6e2" stroke-width="1.2"/><line x1="717" y1="897.2" x2="717" y2="978.7" stroke="#d6d6e2" stroke-width="1.2"/><rect x="515.1" y="899.5" width="73.0" height="16.0" fill="#d75c66"/><rect x="515.1" y="919.3" width="209.0" height="15.7" fill="#f7c462"/><rect x="515.1" y="939.1" width="213.6" height="16.3" fill="#3dae55"/><rect x="515.1" y="959.2" width="223.7" height="16.0" fill="#3dae55"/><path d="M515.1 897.2 V978.7 H757.3" fill="none" stroke="#565887" stroke-width="1.6"/></svg>
<div class="t" style="left:87.00px;top:572.23px;font-size:11.5px;line-height:11.5px;font-weight:400;color:#6b6c90;transform:scaleX(1.0664);transform-origin:0 0;">20k $</div>
<div class="t" style="left:87.00px;top:603.33px;font-size:11.5px;line-height:11.5px;font-weight:400;color:#6b6c90;transform:scaleX(1.0664);transform-origin:0 0;">10k $</div>
<div class="t" style="left:100.00px;top:636.43px;font-size:11.5px;line-height:11.5px;font-weight:400;color:#6b6c90;transform:scaleX(1.0634);transform-origin:0 0;">0 $</div>
<div class="t" style="left:205.80px;top:653.80px;font-size:12px;line-height:12px;font-weight:400;color:#5d5e85;transform:scaleX(0.9790);transform-origin:0 0;">Store-POS</div>
<div class="t" style="left:430.00px;top:653.70px;font-size:12px;line-height:12px;font-weight:400;color:#5d5e85;transform:scaleX(0.9727);transform-origin:0 0;">Web</div>
<div class="t" style="left:89.50px;top:734.03px;font-size:12.2px;line-height:12.2px;font-weight:400;color:#5d5e85;transform:scaleX(0.9638);transform-origin:0 0;">Francisco …ino Menares</div>
<div class="t" style="left:122.90px;top:750.03px;font-size:12.2px;line-height:12.2px;font-weight:400;color:#5d5e85;transform:scaleX(0.9631);transform-origin:0 0;">Jacob R. Crawford</div>
<div class="t" style="left:85.00px;top:766.43px;font-size:12.2px;line-height:12.2px;font-weight:400;color:#5d5e85;transform:scaleX(0.9823);transform-origin:0 0;">Uriel S. Ramirez Castaño</div>
<div class="t" style="left:88.90px;top:782.23px;font-size:12.2px;line-height:12.2px;font-weight:400;color:#5d5e85;transform:scaleX(0.9730);transform-origin:0 0;">Alejandro N…ez Valdivia</div>
<div class="t" style="left:123.30px;top:798.33px;font-size:12.2px;line-height:12.2px;font-weight:400;color:#5d5e85;">Jeffery Yarbrough</div>
<div class="t" style="left:229.50px;top:819.93px;font-size:11.5px;line-height:11.5px;font-weight:400;color:#6b6c90;transform:scaleX(0.9694);transform-origin:0 0;">0</div>
<div class="t" style="left:351.10px;top:819.93px;font-size:11.5px;line-height:11.5px;font-weight:400;color:#6b6c90;transform:scaleX(1.0163);transform-origin:0 0;">50</div>
<div class="t" style="left:486.00px;top:787.50px;font-size:12px;line-height:12px;font-weight:400;color:#2c2d4d;transform:scaleX(0.9701);transform-origin:0 0;">61%</div>
<div class="t" style="left:566.00px;top:774.60px;font-size:12px;line-height:12px;font-weight:400;color:#2c2d4d;transform:scaleX(0.9410);transform-origin:0 0;">29%</div>
<div class="t" style="left:639.20px;top:736.27px;font-size:12.5px;line-height:12.5px;font-weight:400;color:#2c2d4d;transform:scaleX(0.9941);transform-origin:0 0;">Detractor</div>
<div class="t" style="left:639.20px;top:756.38px;font-size:12.5px;line-height:12.5px;font-weight:400;color:#2c2d4d;transform:scaleX(0.9322);transform-origin:0 0;">Passive</div>
<div class="t" style="left:639.20px;top:776.98px;font-size:12.5px;line-height:12.5px;font-weight:400;color:#2c2d4d;transform:scaleX(0.9941);transform-origin:0 0;">Promoter</div>
<div class="t" style="left:101.50px;top:903.43px;font-size:12.2px;line-height:12.2px;font-weight:400;color:#5d5e85;transform:scaleX(0.9788);transform-origin:0 0;">West</div>
<div class="t" style="left:84.30px;top:922.73px;font-size:12.2px;line-height:12.2px;font-weight:400;color:#5d5e85;transform:scaleX(0.9923);transform-origin:0 0;">Midwest</div>
<div class="t" style="left:105.50px;top:943.43px;font-size:12.2px;line-height:12.2px;font-weight:400;color:#5d5e85;transform:scaleX(0.9504);transform-origin:0 0;">East</div>
<div class="t" style="left:97.20px;top:962.73px;font-size:12.2px;line-height:12.2px;font-weight:400;color:#5d5e85;transform:scaleX(0.9880);transform-origin:0 0;">South</div>
<div class="t" style="left:137.80px;top:985.62px;font-size:11.5px;line-height:11.5px;font-weight:400;color:#6b6c90;transform:scaleX(0.9694);transform-origin:0 0;">0</div>
<div class="t" style="left:223.70px;top:985.62px;font-size:11.5px;line-height:11.5px;font-weight:400;color:#6b6c90;transform:scaleX(1.0736);transform-origin:0 0;">500</div>
<div class="t" style="left:324.00px;top:985.62px;font-size:11.5px;line-height:11.5px;font-weight:400;color:#6b6c90;transform:scaleX(1.0374);transform-origin:0 0;">1k</div>
<div class="t" style="left:403.80px;top:985.62px;font-size:11.5px;line-height:11.5px;font-weight:400;color:#6b6c90;transform:scaleX(1.0397);transform-origin:0 0;">1.5k</div>
<div class="t" style="left:499.70px;top:902.27px;font-size:12.5px;line-height:12.5px;font-weight:400;color:#5d5e85;transform:scaleX(0.9494);transform-origin:0 0;">1</div>
<div class="t" style="left:499.70px;top:921.67px;font-size:12.5px;line-height:12.5px;font-weight:400;color:#5d5e85;transform:scaleX(0.9494);transform-origin:0 0;">3</div>
<div class="t" style="left:499.70px;top:941.38px;font-size:12.5px;line-height:12.5px;font-weight:400;color:#5d5e85;transform:scaleX(0.9494);transform-origin:0 0;">4</div>
<div class="t" style="left:499.70px;top:961.27px;font-size:12.5px;line-height:12.5px;font-weight:400;color:#5d5e85;transform:scaleX(0.9494);transform-origin:0 0;">5</div>
<div class="t" style="left:515.10px;top:985.73px;font-size:11.5px;line-height:11.5px;font-weight:400;color:#6b6c90;transform:scaleX(1.0476);transform-origin:0 0;">0</div>
<div class="t" style="left:605.70px;top:985.73px;font-size:11.5px;line-height:11.5px;font-weight:400;color:#6b6c90;transform:scaleX(1.0736);transform-origin:0 0;">500</div>
<div class="t" style="left:704.00px;top:985.73px;font-size:11.5px;line-height:11.5px;font-weight:400;color:#6b6c90;transform:scaleX(1.0703);transform-origin:0 0;">1k</div>
<div class="b" style="left:552.4px;top:654px;width:118.6px;height:41.2px;background:#fdfdfe;border-radius:8px;box-shadow:0 1px 4px rgba(40,40,80,0.18);"></div>
<svg class="b" style="left:0px;top:0px;" width="1968" height="1108" viewBox="0 0 1968 1108"><path d="M573.5 677 L567.8 681.6 M567.8 677 V681.6 H573.5 M576.6 673.2 L581.9 668.2 M576.6 668.2 H581.9 V673.6" stroke="#2c2d4d" stroke-width="1.6" fill="none"/><rect x="608.4" y="670.6" width="10.4" height="11.6" fill="none" stroke="#2c2d4d" stroke-width="1.6"/><path d="M605.2 676.3 V667.2 H613.9" fill="none" stroke="#2c2d4d" stroke-width="1.6"/><path d="M642.1 672.4 V668.3 H655.9 V681.8 H651.3 M642.3 681.6 L648.2 675.6 M642.9 675.8 H648.2 V680.8" stroke="#2c2d4d" stroke-width="1.6" fill="none"/></svg>
<div class="b" style="left:779px;top:559.3px;width:609.8px;height:30.7px;background:#f0f0f4;border-radius:8px 8px 0 0;"></div>
<div class="b" style="left:779px;top:588px;width:609.8px;height:2px;background:#d3d3e0;"></div>
<div class="t" style="left:785.75px;top:565.70px;font-size:14px;line-height:14px;font-weight:400;color:#5c5e8a;transform:scaleX(1.0259);transform-origin:0 0;-webkit-text-stroke:0.5px #5c5e8a;">Warehouse</div>
<div class="t" style="left:909.10px;top:565.70px;font-size:14px;line-height:14px;font-weight:400;color:#5c5e8a;transform:scaleX(0.8781);transform-origin:0 0;-webkit-text-stroke:0.5px #5c5e8a;">SLO</div>
<div class="t" style="left:984.40px;top:565.70px;font-size:14px;line-height:14px;font-weight:400;color:#5c5e8a;transform:scaleX(1.0279);transform-origin:0 0;-webkit-text-stroke:0.5px #5c5e8a;">Penalty</div>
<div class="t" style="left:1082.60px;top:565.70px;font-size:14px;line-height:14px;font-weight:400;color:#5c5e8a;transform:scaleX(1.0073);transform-origin:0 0;-webkit-text-stroke:0.5px #5c5e8a;">Orders</div>
<div class="t" style="left:1175.60px;top:565.70px;font-size:14px;line-height:14px;font-weight:400;color:#5c5e8a;-webkit-text-stroke:0.5px #5c5e8a;">TIWD</div>
<div class="t" style="left:1282.60px;top:565.70px;font-size:14px;line-height:14px;font-weight:400;color:#5c5e8a;transform:scaleX(1.0365);transform-origin:0 0;-webkit-text-stroke:0.5px #5c5e8a;">ErrorRate</div>
<div class="b" style="left:902.4px;top:563.5px;width:1.2px;height:20.3px;background:#dfdfe9;"></div>
<div class="b" style="left:977.4px;top:563.5px;width:1.2px;height:20.3px;background:#dfdfe9;"></div>
<div class="b" style="left:1076.4px;top:563.5px;width:1.2px;height:20.3px;background:#dfdfe9;"></div>
<div class="b" style="left:1168.7px;top:563.5px;width:1.2px;height:20.3px;background:#dfdfe9;"></div>
<div class="b" style="left:1255.1px;top:563.5px;width:1.2px;height:20.3px;background:#dfdfe9;"></div>
<div class="b" style="left:779px;top:618.4px;width:609.8px;height:1.3px;background:#dfdfe9;"></div>
<div class="b" style="left:902.4px;top:594.3px;width:1.2px;height:20px;background:#dfdfe9;"></div>
<div class="b" style="left:977.4px;top:594.3px;width:1.2px;height:20px;background:#dfdfe9;"></div>
<div class="b" style="left:1076.4px;top:594.3px;width:1.2px;height:20px;background:#dfdfe9;"></div>
<div class="b" style="left:1168.7px;top:594.3px;width:1.2px;height:20px;background:#dfdfe9;"></div>
<div class="b" style="left:1255.1px;top:594.3px;width:1.2px;height:20px;background:#dfdfe9;"></div>
<div class="t" style="left:785.75px;top:596.10px;font-size:14px;line-height:14px;font-weight:400;color:#2c2d4d;-webkit-text-stroke:0.25px currentColor;">Boston</div>
<div class="t" style="left:1050.14px;top:596.10px;font-size:14px;line-height:14px;font-weight:400;color:#2c2d4d;-webkit-text-stroke:0.25px currentColor;">0 $</div>
<div class="t" style="left:1139.44px;top:596.10px;font-size:14px;line-height:14px;font-weight:400;color:#2c2d4d;-webkit-text-stroke:0.25px currentColor;">520</div>
<div class="t" style="left:1209.49px;top:596.10px;font-size:14px;line-height:14px;font-weight:400;color:#2c2d4d;-webkit-text-stroke:0.25px currentColor;">24 hrs</div>
<div class="t" style="left:1339.31px;top:596.10px;font-size:14px;line-height:14px;font-weight:400;color:#2c2d4d;-webkit-text-stroke:0.25px currentColor;">0.00 %</div>
<div class="b" style="left:779px;top:619.9px;width:609.8px;height:28.9px;background:#f3f3f6;"></div>
<div class="b" style="left:779px;top:648.2px;width:609.8px;height:1.3px;background:#dfdfe9;"></div>
<div class="b" style="left:902.4px;top:624.1px;width:1.2px;height:20px;background:#dfdfe9;"></div>
<div class="b" style="left:977.4px;top:624.1px;width:1.2px;height:20px;background:#dfdfe9;"></div>
<div class="b" style="left:1076.4px;top:624.1px;width:1.2px;height:20px;background:#dfdfe9;"></div>
<div class="b" style="left:1168.7px;top:624.1px;width:1.2px;height:20px;background:#dfdfe9;"></div>
<div class="b" style="left:1255.1px;top:624.1px;width:1.2px;height:20px;background:#dfdfe9;"></div>
<div class="t" style="left:785.75px;top:625.95px;font-size:14px;line-height:14px;font-weight:400;color:#2c2d4d;-webkit-text-stroke:0.25px currentColor;">California</div>
<div class="t" style="left:1050.14px;top:625.95px;font-size:14px;line-height:14px;font-weight:400;color:#2c2d4d;-webkit-text-stroke:0.25px currentColor;">0 $</div>
<div class="t" style="left:1139.44px;top:625.95px;font-size:14px;line-height:14px;font-weight:400;color:#2c2d4d;-webkit-text-stroke:0.25px currentColor;">535</div>
<div class="t" style="left:1209.49px;top:625.95px;font-size:14px;line-height:14px;font-weight:400;color:#2c2d4d;-webkit-text-stroke:0.25px currentColor;">24 hrs</div>
<div class="t" style="left:1339.31px;top:625.95px;font-size:14px;line-height:14px;font-weight:400;color:#2c2d4d;-webkit-text-stroke:0.25px currentColor;">0.00 %</div>
<div class="b" style="left:779px;top:678.1px;width:609.8px;height:1.3px;background:#dfdfe9;"></div>
<div class="b" style="left:902.4px;top:654.0px;width:1.2px;height:20px;background:#dfdfe9;"></div>
<div class="b" style="left:977.4px;top:654.0px;width:1.2px;height:20px;background:#dfdfe9;"></div>
<div class="b" style="left:1076.4px;top:654.0px;width:1.2px;height:20px;background:#dfdfe9;"></div>
<div class="b" style="left:1168.7px;top:654.0px;width:1.2px;height:20px;background:#dfdfe9;"></div>
<div class="b" style="left:1255.1px;top:654.0px;width:1.2px;height:20px;background:#dfdfe9;"></div>
<div class="t" style="left:785.75px;top:655.80px;font-size:14px;line-height:14px;font-weight:400;color:#2c2d4d;-webkit-text-stroke:0.25px currentColor;">Florida</div>
<div class="t" style="left:1050.14px;top:655.80px;font-size:14px;line-height:14px;font-weight:400;color:#2c2d4d;-webkit-text-stroke:0.25px currentColor;">0 $</div>
<div class="t" style="left:1139.44px;top:655.80px;font-size:14px;line-height:14px;font-weight:400;color:#2c2d4d;-webkit-text-stroke:0.25px currentColor;">502</div>
<div class="t" style="left:1209.49px;top:655.80px;font-size:14px;line-height:14px;font-weight:400;color:#2c2d4d;-webkit-text-stroke:0.25px currentColor;">24 hrs</div>
<div class="t" style="left:1339.31px;top:655.80px;font-size:14px;line-height:14px;font-weight:400;color:#2c2d4d;-webkit-text-stroke:0.25px currentColor;">0.00 %</div>
<div class="b" style="left:779px;top:679.5px;width:609.8px;height:28.9px;background:#f3f3f6;"></div>
<div class="b" style="left:779px;top:707.9px;width:609.8px;height:1.3px;background:#dfdfe9;"></div>
<div class="b" style="left:902.4px;top:683.8px;width:1.2px;height:20px;background:#dfdfe9;"></div>
<div class="b" style="left:977.4px;top:683.8px;width:1.2px;height:20px;background:#dfdfe9;"></div>
<div class="b" style="left:1076.4px;top:683.8px;width:1.2px;height:20px;background:#dfdfe9;"></div>
<div class="b" style="left:1168.7px;top:683.8px;width:1.2px;height:20px;background:#dfdfe9;"></div>
<div class="b" style="left:1255.1px;top:683.8px;width:1.2px;height:20px;background:#dfdfe9;"></div>
<div class="t" style="left:785.75px;top:685.65px;font-size:14px;line-height:14px;font-weight:400;color:#2c2d4d;-webkit-text-stroke:0.25px currentColor;">Michigan</div>
<div class="t" style="left:1050.14px;top:685.65px;font-size:14px;line-height:14px;font-weight:400;color:#2c2d4d;-webkit-text-stroke:0.25px currentColor;">0 $</div>
<div class="t" style="left:1139.44px;top:685.65px;font-size:14px;line-height:14px;font-weight:400;color:#2c2d4d;-webkit-text-stroke:0.25px currentColor;">546</div>
<div class="t" style="left:1209.49px;top:685.65px;font-size:14px;line-height:14px;font-weight:400;color:#2c2d4d;-webkit-text-stroke:0.25px currentColor;">24 hrs</div>
<div class="t" style="left:1339.31px;top:685.65px;font-size:14px;line-height:14px;font-weight:400;color:#2c2d4d;-webkit-text-stroke:0.25px currentColor;">0.00 %</div>
<div class="b" style="left:779px;top:737.8px;width:609.8px;height:1.3px;background:#dfdfe9;"></div>
<div class="b" style="left:902.4px;top:713.7px;width:1.2px;height:20px;background:#dfdfe9;"></div>
<div class="b" style="left:977.4px;top:713.7px;width:1.2px;height:20px;background:#dfdfe9;"></div>
<div class="b" style="left:1076.4px;top:713.7px;width:1.2px;height:20px;background:#dfdfe9;"></div>
<div class="b" style="left:1168.7px;top:713.7px;width:1.2px;height:20px;background:#dfdfe9;"></div>
<div class="b" style="left:1255.1px;top:713.7px;width:1.2px;height:20px;background:#dfdfe9;"></div>
<div class="t" style="left:785.75px;top:715.50px;font-size:14px;line-height:14px;font-weight:400;color:#2c2d4d;-webkit-text-stroke:0.25px currentColor;">Minnesota</div>
<div class="t" style="left:1050.14px;top:715.50px;font-size:14px;line-height:14px;font-weight:400;color:#2c2d4d;-webkit-text-stroke:0.25px currentColor;">0 $</div>
<div class="t" style="left:1139.44px;top:715.50px;font-size:14px;line-height:14px;font-weight:400;color:#2c2d4d;-webkit-text-stroke:0.25px currentColor;">494</div>
<div class="t" style="left:1209.49px;top:715.50px;font-size:14px;line-height:14px;font-weight:400;color:#2c2d4d;-webkit-text-stroke:0.25px currentColor;">24 hrs</div>
<div class="t" style="left:1339.31px;top:715.50px;font-size:14px;line-height:14px;font-weight:400;color:#2c2d4d;-webkit-text-stroke:0.25px currentColor;">0.00 %</div>
<div class="b" style="left:779px;top:739.2px;width:609.8px;height:28.9px;background:#f3f3f6;"></div>
<div class="b" style="left:779px;top:767.6px;width:609.8px;height:1.3px;background:#dfdfe9;"></div>
<div class="b" style="left:902.4px;top:743.5px;width:1.2px;height:20px;background:#dfdfe9;"></div>
<div class="b" style="left:977.4px;top:743.5px;width:1.2px;height:20px;background:#dfdfe9;"></div>
<div class="b" style="left:1076.4px;top:743.5px;width:1.2px;height:20px;background:#dfdfe9;"></div>
<div class="b" style="left:1168.7px;top:743.5px;width:1.2px;height:20px;background:#dfdfe9;"></div>
<div class="b" style="left:1255.1px;top:743.5px;width:1.2px;height:20px;background:#dfdfe9;"></div>
<div class="t" style="left:785.75px;top:745.35px;font-size:14px;line-height:14px;font-weight:400;color:#2c2d4d;-webkit-text-stroke:0.25px currentColor;">Nevada</div>
<div class="t" style="left:1022.89px;top:745.35px;font-size:14px;line-height:14px;font-weight:400;color:#d0364a;-webkit-text-stroke:0.25px currentColor;">5,218 $</div>
<div class="t" style="left:1139.44px;top:745.35px;font-size:14px;line-height:14px;font-weight:400;color:#2c2d4d;-webkit-text-stroke:0.25px currentColor;">483</div>
<div class="t" style="left:1209.49px;top:745.35px;font-size:14px;line-height:14px;font-weight:400;color:#d0364a;-webkit-text-stroke:0.25px currentColor;">76 hrs</div>
<div class="t" style="left:1331.53px;top:745.35px;font-size:14px;line-height:14px;font-weight:400;color:#d0364a;-webkit-text-stroke:0.25px currentColor;">50.00 %</div>
<div class="b" style="left:779px;top:797.5px;width:609.8px;height:1.3px;background:#dfdfe9;"></div>
<div class="b" style="left:902.4px;top:773.4px;width:1.2px;height:20px;background:#dfdfe9;"></div>
<div class="b" style="left:977.4px;top:773.4px;width:1.2px;height:20px;background:#dfdfe9;"></div>
<div class="b" style="left:1076.4px;top:773.4px;width:1.2px;height:20px;background:#dfdfe9;"></div>
<div class="b" style="left:1168.7px;top:773.4px;width:1.2px;height:20px;background:#dfdfe9;"></div>
<div class="b" style="left:1255.1px;top:773.4px;width:1.2px;height:20px;background:#dfdfe9;"></div>
<div class="t" style="left:785.75px;top:775.20px;font-size:14px;line-height:14px;font-weight:400;color:#2c2d4d;-webkit-text-stroke:0.25px currentColor;">Oregon</div>
<div class="t" style="left:1050.14px;top:775.20px;font-size:14px;line-height:14px;font-weight:400;color:#2c2d4d;-webkit-text-stroke:0.25px currentColor;">0 $</div>
<div class="t" style="left:1139.44px;top:775.20px;font-size:14px;line-height:14px;font-weight:400;color:#2c2d4d;-webkit-text-stroke:0.25px currentColor;">509</div>
<div class="t" style="left:1209.49px;top:775.20px;font-size:14px;line-height:14px;font-weight:400;color:#2c2d4d;-webkit-text-stroke:0.25px currentColor;">24 hrs</div>
<div class="t" style="left:1339.31px;top:775.20px;font-size:14px;line-height:14px;font-weight:400;color:#2c2d4d;-webkit-text-stroke:0.25px currentColor;">0.00 %</div>
<div class="b" style="left:1402.3px;top:559.3px;width:531.7px;height:30.7px;background:#f0f0f4;border-radius:8px 8px 0 0;"></div>
<div class="b" style="left:1402.3px;top:588px;width:531.7px;height:2px;background:#d3d3e0;"></div>
<div class="t" style="left:1409.00px;top:565.70px;font-size:14px;line-height:14px;font-weight:400;color:#5c5e8a;transform:scaleX(1.0266);transform-origin:0 0;-webkit-text-stroke:0.5px #5c5e8a;">Warehouse</div>
<div class="t" style="left:1532.40px;top:565.70px;font-size:14px;line-height:14px;font-weight:400;color:#5c5e8a;transform:scaleX(1.0239);transform-origin:0 0;-webkit-text-stroke:0.5px #5c5e8a;">ServiceVersion</div>
<div class="t" style="left:1679.30px;top:565.70px;font-size:14px;line-height:14px;font-weight:400;color:#5c5e8a;transform:scaleX(1.0128);transform-origin:0 0;-webkit-text-stroke:0.5px #5c5e8a;">ServiceName</div>
<div class="t" style="left:1847.60px;top:565.70px;font-size:14px;line-height:14px;font-weight:400;color:#5c5e8a;transform:scaleX(1.0073);transform-origin:0 0;-webkit-text-stroke:0.5px #5c5e8a;">Orders</div>
<div class="b" style="left:1525.7px;top:563.5px;width:1.2px;height:20.3px;background:#dfdfe9;"></div>
<div class="b" style="left:1672.5px;top:563.5px;width:1.2px;height:20.3px;background:#dfdfe9;"></div>
<div class="b" style="left:1827px;top:563.5px;width:1.2px;height:20.3px;background:#dfdfe9;"></div>
<div class="b" style="left:1402.3px;top:618.4px;width:531.7px;height:1.3px;background:#dfdfe9;"></div>
<div class="b" style="left:1525.7px;top:594.3px;width:1.2px;height:20px;background:#dfdfe9;"></div>
<div class="b" style="left:1672.5px;top:594.3px;width:1.2px;height:20px;background:#dfdfe9;"></div>
<div class="b" style="left:1827px;top:594.3px;width:1.2px;height:20px;background:#dfdfe9;"></div>
<div class="t" style="left:1409.00px;top:596.10px;font-size:14px;line-height:14px;font-weight:400;color:#2c2d4d;-webkit-text-stroke:0.25px currentColor;">Boston</div>
<div class="t" style="left:1556.00px;top:596.10px;font-size:14px;line-height:14px;font-weight:400;color:#2c2d4d;transform:scaleX(0.9763);transform-origin:0 0;-webkit-text-stroke:0.25px currentColor;">1.3</div>
<div class="t" style="left:1679.30px;top:596.10px;font-size:14px;line-height:14px;font-weight:400;color:#2c2d4d;transform:scaleX(1.0697);transform-origin:0 0;-webkit-text-stroke:0.25px currentColor;">lightningDistribution</div>
<div class="t" style="left:1904.64px;top:596.10px;font-size:14px;line-height:14px;font-weight:400;color:#2c2d4d;-webkit-text-stroke:0.25px currentColor;">518</div>
<div class="b" style="left:1402.3px;top:619.9px;width:531.7px;height:28.9px;background:#f3f3f6;"></div>
<div class="b" style="left:1402.3px;top:648.2px;width:531.7px;height:1.3px;background:#dfdfe9;"></div>
<div class="b" style="left:1525.7px;top:624.1px;width:1.2px;height:20px;background:#dfdfe9;"></div>
<div class="b" style="left:1672.5px;top:624.1px;width:1.2px;height:20px;background:#dfdfe9;"></div>
<div class="b" style="left:1827px;top:624.1px;width:1.2px;height:20px;background:#dfdfe9;"></div>
<div class="t" style="left:1409.00px;top:625.95px;font-size:14px;line-height:14px;font-weight:400;color:#2c2d4d;-webkit-text-stroke:0.25px currentColor;">California</div>
<div class="t" style="left:1556.00px;top:625.95px;font-size:14px;line-height:14px;font-weight:400;color:#2c2d4d;transform:scaleX(0.9763);transform-origin:0 0;-webkit-text-stroke:0.25px currentColor;">1.3</div>
<div class="t" style="left:1679.30px;top:625.95px;font-size:14px;line-height:14px;font-weight:400;color:#2c2d4d;transform:scaleX(1.0697);transform-origin:0 0;-webkit-text-stroke:0.25px currentColor;">lightningDistribution</div>
<div class="t" style="left:1904.64px;top:625.95px;font-size:14px;line-height:14px;font-weight:400;color:#2c2d4d;-webkit-text-stroke:0.25px currentColor;">530</div>
<div class="b" style="left:1402.3px;top:678.1px;width:531.7px;height:1.3px;background:#dfdfe9;"></div>
<div class="b" style="left:1525.7px;top:654.0px;width:1.2px;height:20px;background:#dfdfe9;"></div>
<div class="b" style="left:1672.5px;top:654.0px;width:1.2px;height:20px;background:#dfdfe9;"></div>
<div class="b" style="left:1827px;top:654.0px;width:1.2px;height:20px;background:#dfdfe9;"></div>
<div class="t" style="left:1409.00px;top:655.80px;font-size:14px;line-height:14px;font-weight:400;color:#2c2d4d;-webkit-text-stroke:0.25px currentColor;">Florida</div>
<div class="t" style="left:1556.00px;top:655.80px;font-size:14px;line-height:14px;font-weight:400;color:#2c2d4d;transform:scaleX(0.9763);transform-origin:0 0;-webkit-text-stroke:0.25px currentColor;">1.3</div>
<div class="t" style="left:1679.30px;top:655.80px;font-size:14px;line-height:14px;font-weight:400;color:#2c2d4d;transform:scaleX(1.0697);transform-origin:0 0;-webkit-text-stroke:0.25px currentColor;">lightningDistribution</div>
<div class="t" style="left:1904.64px;top:655.80px;font-size:14px;line-height:14px;font-weight:400;color:#2c2d4d;-webkit-text-stroke:0.25px currentColor;">499</div>
<div class="b" style="left:1402.3px;top:679.5px;width:531.7px;height:28.9px;background:#f3f3f6;"></div>
<div class="b" style="left:1402.3px;top:707.9px;width:531.7px;height:1.3px;background:#dfdfe9;"></div>
<div class="b" style="left:1525.7px;top:683.8px;width:1.2px;height:20px;background:#dfdfe9;"></div>
<div class="b" style="left:1672.5px;top:683.8px;width:1.2px;height:20px;background:#dfdfe9;"></div>
<div class="b" style="left:1827px;top:683.8px;width:1.2px;height:20px;background:#dfdfe9;"></div>
<div class="t" style="left:1409.00px;top:685.65px;font-size:14px;line-height:14px;font-weight:400;color:#2c2d4d;-webkit-text-stroke:0.25px currentColor;">Michigan</div>
<div class="t" style="left:1556.00px;top:685.65px;font-size:14px;line-height:14px;font-weight:400;color:#2c2d4d;transform:scaleX(0.9763);transform-origin:0 0;-webkit-text-stroke:0.25px currentColor;">1.3</div>
<div class="t" style="left:1679.30px;top:685.65px;font-size:14px;line-height:14px;font-weight:400;color:#2c2d4d;transform:scaleX(1.0697);transform-origin:0 0;-webkit-text-stroke:0.25px currentColor;">lightningDistribution</div>
<div class="t" style="left:1904.64px;top:685.65px;font-size:14px;line-height:14px;font-weight:400;color:#2c2d4d;-webkit-text-stroke:0.25px currentColor;">546</div>
<div class="b" style="left:1402.3px;top:737.8px;width:531.7px;height:1.3px;background:#dfdfe9;"></div>
<div class="b" style="left:1525.7px;top:713.7px;width:1.2px;height:20px;background:#dfdfe9;"></div>
<div class="b" style="left:1672.5px;top:713.7px;width:1.2px;height:20px;background:#dfdfe9;"></div>
<div class="b" style="left:1827px;top:713.7px;width:1.2px;height:20px;background:#dfdfe9;"></div>
<div class="t" style="left:1409.00px;top:715.50px;font-size:14px;line-height:14px;font-weight:400;color:#2c2d4d;-webkit-text-stroke:0.25px currentColor;">Minnesota</div>
<div class="t" style="left:1556.00px;top:715.50px;font-size:14px;line-height:14px;font-weight:400;color:#2c2d4d;transform:scaleX(0.9763);transform-origin:0 0;-webkit-text-stroke:0.25px currentColor;">1.3</div>
<div class="t" style="left:1679.30px;top:715.50px;font-size:14px;line-height:14px;font-weight:400;color:#2c2d4d;transform:scaleX(1.0697);transform-origin:0 0;-webkit-text-stroke:0.25px currentColor;">lightningDistribution</div>
<div class="t" style="left:1904.64px;top:715.50px;font-size:14px;line-height:14px;font-weight:400;color:#2c2d4d;-webkit-text-stroke:0.25px currentColor;">492</div>
<div class="b" style="left:1402.3px;top:739.2px;width:531.7px;height:28.9px;background:#f3f3f6;"></div>
<div class="b" style="left:1402.3px;top:767.6px;width:531.7px;height:1.3px;background:#dfdfe9;"></div>
<div class="b" style="left:1525.7px;top:743.5px;width:1.2px;height:20px;background:#dfdfe9;"></div>
<div class="b" style="left:1672.5px;top:743.5px;width:1.2px;height:20px;background:#dfdfe9;"></div>
<div class="b" style="left:1827px;top:743.5px;width:1.2px;height:20px;background:#dfdfe9;"></div>
<div class="t" style="left:1409.00px;top:745.35px;font-size:14px;line-height:14px;font-weight:400;color:#2c2d4d;-webkit-text-stroke:0.25px currentColor;">Nevada</div>
<div class="t" style="left:1556.00px;top:745.35px;font-size:14px;line-height:14px;font-weight:400;color:#2c2d4d;transform:scaleX(0.9763);transform-origin:0 0;-webkit-text-stroke:0.25px currentColor;">1.2</div>
<div class="t" style="left:1679.30px;top:745.35px;font-size:14px;line-height:14px;font-weight:400;color:#2c2d4d;transform:scaleX(1.0697);transform-origin:0 0;-webkit-text-stroke:0.25px currentColor;">lightningDistribution</div>
<div class="t" style="left:1904.64px;top:745.35px;font-size:14px;line-height:14px;font-weight:400;color:#2c2d4d;-webkit-text-stroke:0.25px currentColor;">488</div>
<div class="b" style="left:1402.3px;top:797.5px;width:531.7px;height:1.3px;background:#dfdfe9;"></div>
<div class="b" style="left:1525.7px;top:773.4px;width:1.2px;height:20px;background:#dfdfe9;"></div>
<div class="b" style="left:1672.5px;top:773.4px;width:1.2px;height:20px;background:#dfdfe9;"></div>
<div class="b" style="left:1827px;top:773.4px;width:1.2px;height:20px;background:#dfdfe9;"></div>
<div class="t" style="left:1409.00px;top:775.20px;font-size:14px;line-height:14px;font-weight:400;color:#2c2d4d;-webkit-text-stroke:0.25px currentColor;">Nevada</div>
<div class="t" style="left:1556.00px;top:775.20px;font-size:14px;line-height:14px;font-weight:400;color:#2c2d4d;transform:scaleX(0.9763);transform-origin:0 0;-webkit-text-stroke:0.25px currentColor;">6.8</div>
<div class="t" style="left:1679.30px;top:775.20px;font-size:14px;line-height:14px;font-weight:400;color:#2c2d4d;transform:scaleX(1.0850);transform-origin:0 0;-webkit-text-stroke:0.25px currentColor;">oldfaithfulDistribution</div>
<div class="t" style="left:1904.64px;top:775.20px;font-size:14px;line-height:14px;font-weight:400;color:#2c2d4d;-webkit-text-stroke:0.25px currentColor;">488</div>
<div class="b" style="left:1402.3px;top:799.0px;width:531.7px;height:28.9px;background:#f3f3f6;"></div>
<div class="b" style="left:1402.3px;top:827.4px;width:531.7px;height:1.3px;background:#dfdfe9;"></div>
<div class="b" style="left:1525.7px;top:803.2px;width:1.2px;height:20px;background:#dfdfe9;"></div>
<div class="b" style="left:1672.5px;top:803.2px;width:1.2px;height:20px;background:#dfdfe9;"></div>
<div class="b" style="left:1827px;top:803.2px;width:1.2px;height:20px;background:#dfdfe9;"></div>
<div class="t" style="left:1409.00px;top:805.05px;font-size:14px;line-height:14px;font-weight:400;color:#2c2d4d;-webkit-text-stroke:0.25px currentColor;">Oregon</div>
<div class="t" style="left:1556.00px;top:805.05px;font-size:14px;line-height:14px;font-weight:400;color:#2c2d4d;transform:scaleX(0.9763);transform-origin:0 0;-webkit-text-stroke:0.25px currentColor;">1.3</div>
<div class="t" style="left:1679.30px;top:805.05px;font-size:14px;line-height:14px;font-weight:400;color:#2c2d4d;transform:scaleX(1.0697);transform-origin:0 0;-webkit-text-stroke:0.25px currentColor;">lightningDistribution</div>
<div class="t" style="left:1904.64px;top:805.05px;font-size:14px;line-height:14px;font-weight:400;color:#2c2d4d;-webkit-text-stroke:0.25px currentColor;">512</div>
<div class="b" style="left:779px;top:891px;width:1153.7px;height:30.5px;background:#f0f0f4;border-radius:8px 8px 0 0;"></div>
<div class="b" style="left:779px;top:919.6px;width:1153.7px;height:2px;background:#d3d3e0;"></div>
<div class="t" style="left:786.00px;top:897.90px;font-size:14px;line-height:14px;font-weight:400;color:#5c5e8a;transform:scaleX(1.0582);transform-origin:0 0;-webkit-text-stroke:0.5px #5c5e8a;">Status</div>
<div class="t" style="left:878.00px;top:897.90px;font-size:14px;line-height:14px;font-weight:400;color:#5c5e8a;transform:scaleX(0.9804);transform-origin:0 0;-webkit-text-stroke:0.5px #5c5e8a;">Time</div>
<div class="t" style="left:969.70px;top:897.90px;font-size:14px;line-height:14px;font-weight:400;color:#5c5e8a;transform:scaleX(1.0238);transform-origin:0 0;-webkit-text-stroke:0.5px #5c5e8a;">Warehouse</div>
<div class="t" style="left:1093.20px;top:897.90px;font-size:14px;line-height:14px;font-weight:400;color:#5c5e8a;transform:scaleX(1.0324);transform-origin:0 0;-webkit-text-stroke:0.5px #5c5e8a;">ErrorMessaage</div>
<div class="t" style="left:1456.80px;top:897.90px;font-size:14px;line-height:14px;font-weight:400;color:#5c5e8a;transform:scaleX(1.0259);transform-origin:0 0;-webkit-text-stroke:0.5px #5c5e8a;">ServiceName</div>
<div class="t" style="left:1855.50px;top:897.90px;font-size:14px;line-height:14px;font-weight:400;color:#5c5e8a;transform:scaleX(1.0924);transform-origin:0 0;-webkit-text-stroke:0.5px #5c5e8a;">Total</div>
<div class="b" style="left:871.5px;top:895.5px;width:1.2px;height:20.3px;background:#dfdfe9;"></div>
<div class="b" style="left:964px;top:895.5px;width:1.2px;height:20.3px;background:#dfdfe9;"></div>
<div class="b" style="left:1086.9px;top:895.5px;width:1.2px;height:20.3px;background:#dfdfe9;"></div>
<div class="b" style="left:1451px;top:895.5px;width:1.2px;height:20.3px;background:#dfdfe9;"></div>
<div class="b" style="left:1594.5px;top:895.5px;width:1.2px;height:20.3px;background:#dfdfe9;"></div>
<div class="b" style="left:779px;top:950.3px;width:1153.7px;height:1.3px;background:#dfdfe9;"></div>
<div class="b" style="left:871.5px;top:925.9px;width:1.2px;height:20px;background:#dfdfe9;"></div>
<div class="b" style="left:964px;top:925.9px;width:1.2px;height:20px;background:#dfdfe9;"></div>
<div class="b" style="left:1086.9px;top:925.9px;width:1.2px;height:20px;background:#dfdfe9;"></div>
<div class="b" style="left:1451px;top:925.9px;width:1.2px;height:20px;background:#dfdfe9;"></div>
<div class="b" style="left:1594.5px;top:925.9px;width:1.2px;height:20px;background:#dfdfe9;"></div>
<div class="t" style="left:878.00px;top:928.40px;font-size:14px;line-height:14px;font-weight:400;color:#2c2d4d;transform:scaleX(1.0666);transform-origin:0 0;-webkit-text-stroke:0.25px currentColor;">Thu-Mar-21</div>
<div class="t" style="left:969.70px;top:928.40px;font-size:14px;line-height:14px;font-weight:400;color:#2c2d4d;-webkit-text-stroke:0.25px currentColor;">Nevada</div>
<div class="t" style="left:1093.20px;top:928.40px;font-size:14px;line-height:14px;font-weight:400;color:#2c2d4d;-webkit-text-stroke:0.25px currentColor;">Shipment service returned: [ERROR ZipCode Required!]</div>
<div class="t" style="left:1456.80px;top:928.40px;font-size:14px;line-height:14px;font-weight:400;color:#2c2d4d;transform:scaleX(1.0714);transform-origin:0 0;-webkit-text-stroke:0.25px currentColor;">lightningDistribution</div>
<div class="t" style="left:1904.44px;top:928.40px;font-size:14px;line-height:14px;font-weight:400;color:#2c2d4d;-webkit-text-stroke:0.25px currentColor;">488</div>
<div class="b" style="left:76.8px;top:1057.3px;width:1842px;height:30.5px;background:#f0f0f4;border-radius:8px 0 0 0;"></div>
<div class="b" style="left:76.8px;top:1086px;width:1842px;height:2px;background:#d3d3e0;"></div>
<div class="t" style="left:83.80px;top:1064.30px;font-size:14px;line-height:14px;font-weight:400;color:#5c5e8a;transform:scaleX(1.0181);transform-origin:0 0;-webkit-text-stroke:0.5px #5c5e8a;">Rating</div>
<div class="t" style="left:176.00px;top:1064.30px;font-size:14px;line-height:14px;font-weight:400;color:#5c5e8a;transform:scaleX(0.9868);transform-origin:0 0;-webkit-text-stroke:0.5px #5c5e8a;">Time</div>
<div class="t" style="left:343.30px;top:1064.30px;font-size:14px;line-height:14px;font-weight:400;color:#5c5e8a;transform:scaleX(1.0489);transform-origin:0 0;-webkit-text-stroke:0.5px #5c5e8a;">CustomerId</div>
<div class="t" style="left:638.30px;top:1064.30px;font-size:14px;line-height:14px;font-weight:400;color:#5c5e8a;transform:scaleX(1.0472);transform-origin:0 0;-webkit-text-stroke:0.5px #5c5e8a;">OrderId</div>
<div class="t" style="left:938.00px;top:1064.30px;font-size:14px;line-height:14px;font-weight:400;color:#5c5e8a;-webkit-text-stroke:0.5px #5c5e8a;">Review</div>
<div class="b" style="left:169.2px;top:1061.5px;width:1.2px;height:20.3px;background:#dfdfe9;"></div>
<div class="b" style="left:336.3px;top:1061.5px;width:1.2px;height:20.3px;background:#dfdfe9;"></div>
<div class="b" style="left:631.8px;top:1061.5px;width:1.2px;height:20.3px;background:#dfdfe9;"></div>
<div class="b" style="left:931px;top:1061.5px;width:1.2px;height:20.3px;background:#dfdfe9;"></div>
<svg class="b" style="left:0px;top:0px;" width="1968" height="1108" viewBox="0 0 1968 1108"><path d="M865.0 572.5 L869.3 568.3 L873.6 572.5 Z" fill="#5c5e8a"/><path d="M865.0 574.3 L869.3 578.5 L873.6 574.3 Z" fill="#5c5e8a"/><path d="M881.7 571.2 L885.7 575.2 L889.7 571.2" fill="none" stroke="#5c5e8a" stroke-width="1.45" stroke-linecap="round" stroke-linejoin="round"/><path d="M939.5 572.5 L943.8 568.3 L948.1 572.5 Z" fill="#5c5e8a"/><path d="M939.5 574.3 L943.8 578.5 L948.1 574.3 Z" fill="#5c5e8a"/><path d="M956.2 571.2 L960.2 575.2 L964.2 571.2" fill="none" stroke="#5c5e8a" stroke-width="1.45" stroke-linecap="round" stroke-linejoin="round"/><path d="M1038.2 572.5 L1042.5 568.3 L1046.8 572.5 Z" fill="#5c5e8a"/><path d="M1038.2 574.3 L1042.5 578.5 L1046.8 574.3 Z" fill="#5c5e8a"/><path d="M1054.9 571.2 L1058.9 575.2 L1062.9 571.2" fill="none" stroke="#5c5e8a" stroke-width="1.45" stroke-linecap="round" stroke-linejoin="round"/><path d="M1131.5 572.5 L1135.8 568.3 L1140.1 572.5 Z" fill="#5c5e8a"/><path d="M1131.5 574.3 L1135.8 578.5 L1140.1 574.3 Z" fill="#5c5e8a"/><path d="M1148.2 571.2 L1152.2 575.2 L1156.2 571.2" fill="none" stroke="#5c5e8a" stroke-width="1.45" stroke-linecap="round" stroke-linejoin="round"/><path d="M1217.1 572.5 L1221.4 568.3 L1225.7 572.5 Z" fill="#5c5e8a"/><path d="M1217.1 574.3 L1221.4 578.5 L1225.7 574.3 Z" fill="#5c5e8a"/><path d="M1233.8 571.2 L1237.8 575.2 L1241.8 571.2" fill="none" stroke="#5c5e8a" stroke-width="1.45" stroke-linecap="round" stroke-linejoin="round"/><path d="M1351.3 572.5 L1355.6 568.3 L1359.9 572.5 Z" fill="#5c5e8a"/><path d="M1351.3 574.3 L1355.6 578.5 L1359.9 574.3 Z" fill="#5c5e8a"/><path d="M1368.0 571.2 L1372.0 575.2 L1376.0 571.2" fill="none" stroke="#5c5e8a" stroke-width="1.45" stroke-linecap="round" stroke-linejoin="round"/><rect x="911.2" y="596.0" width="14.7" height="14.7" rx="2.6" fill="#14c95c"/><path d="M914.5 603.6 L917.4 606.4 L922.8 600.6" fill="none" stroke="#fff" stroke-width="1.7" stroke-linecap="round" stroke-linejoin="round"/><rect x="911.2" y="625.9" width="14.7" height="14.7" rx="2.6" fill="#14c95c"/><path d="M914.5 633.5 L917.4 636.3 L922.8 630.5" fill="none" stroke="#fff" stroke-width="1.7" stroke-linecap="round" stroke-linejoin="round"/><rect x="911.2" y="655.7" width="14.7" height="14.7" rx="2.6" fill="#14c95c"/><path d="M914.5 663.3 L917.4 666.1 L922.8 660.3" fill="none" stroke="#fff" stroke-width="1.7" stroke-linecap="round" stroke-linejoin="round"/><rect x="911.2" y="685.5" width="14.7" height="14.7" rx="2.6" fill="#14c95c"/><path d="M914.5 693.1 L917.4 695.9 L922.8 690.1" fill="none" stroke="#fff" stroke-width="1.7" stroke-linecap="round" stroke-linejoin="round"/><rect x="911.2" y="715.4" width="14.7" height="14.7" rx="2.6" fill="#14c95c"/><path d="M914.5 723.0 L917.4 725.8 L922.8 720.0" fill="none" stroke="#fff" stroke-width="1.7" stroke-linecap="round" stroke-linejoin="round"/><path d="M911.9 745.9 L925.1 759.1 M925.1 745.9 L911.9 759.1" stroke="#e8304f" stroke-width="2.6" stroke-linecap="round"/><rect x="911.2" y="775.1" width="14.7" height="14.7" rx="2.6" fill="#14c95c"/><path d="M914.5 782.7 L917.4 785.5 L922.8 779.7" fill="none" stroke="#fff" stroke-width="1.7" stroke-linecap="round" stroke-linejoin="round"/><path d="M1488.3 572.5 L1492.6 568.3 L1496.9 572.5 Z" fill="#5c5e8a"/><path d="M1488.3 574.3 L1492.6 578.5 L1496.9 574.3 Z" fill="#5c5e8a"/><path d="M1505.0 571.2 L1509.0 575.2 L1513.0 571.2" fill="none" stroke="#5c5e8a" stroke-width="1.45" stroke-linecap="round" stroke-linejoin="round"/><path d="M1634.6 572.5 L1638.9 568.3 L1643.2 572.5 Z" fill="#5c5e8a"/><path d="M1634.6 574.3 L1638.9 578.5 L1643.2 574.3 Z" fill="#5c5e8a"/><path d="M1651.3 571.2 L1655.3 575.2 L1659.3 571.2" fill="none" stroke="#5c5e8a" stroke-width="1.45" stroke-linecap="round" stroke-linejoin="round"/><path d="M1770.2 572.5 L1774.5 568.3 L1778.8 572.5 Z" fill="#5c5e8a"/><path d="M1770.2 574.3 L1774.5 578.5 L1778.8 574.3 Z" fill="#5c5e8a"/><path d="M1786.9 571.2 L1790.9 575.2 L1794.9 571.2" fill="none" stroke="#5c5e8a" stroke-width="1.45" stroke-linecap="round" stroke-linejoin="round"/><path d="M1896.5 572.5 L1900.8 568.3 L1905.1 572.5 Z" fill="#5c5e8a"/><path d="M1896.5 574.3 L1900.8 578.5 L1905.1 574.3 Z" fill="#5c5e8a"/><path d="M1913.2 571.2 L1917.2 575.2 L1921.2 571.2" fill="none" stroke="#5c5e8a" stroke-width="1.45" stroke-linecap="round" stroke-linejoin="round"/><rect x="1534.3" y="596.0" width="14.7" height="14.7" rx="2.6" fill="#14c95c"/><path d="M1537.6 603.6 L1540.5 606.4 L1545.9 600.6" fill="none" stroke="#fff" stroke-width="1.7" stroke-linecap="round" stroke-linejoin="round"/><rect x="1534.3" y="625.9" width="14.7" height="14.7" rx="2.6" fill="#14c95c"/><path d="M1537.6 633.5 L1540.5 636.3 L1545.9 630.5" fill="none" stroke="#fff" stroke-width="1.7" stroke-linecap="round" stroke-linejoin="round"/><rect x="1534.3" y="655.7" width="14.7" height="14.7" rx="2.6" fill="#14c95c"/><path d="M1537.6 663.3 L1540.5 666.1 L1545.9 660.3" fill="none" stroke="#fff" stroke-width="1.7" stroke-linecap="round" stroke-linejoin="round"/><rect x="1534.3" y="685.5" width="14.7" height="14.7" rx="2.6" fill="#14c95c"/><path d="M1537.6 693.1 L1540.5 695.9 L1545.9 690.1" fill="none" stroke="#fff" stroke-width="1.7" stroke-linecap="round" stroke-linejoin="round"/><rect x="1534.3" y="715.4" width="14.7" height="14.7" rx="2.6" fill="#14c95c"/><path d="M1537.6 723.0 L1540.5 725.8 L1545.9 720.0" fill="none" stroke="#fff" stroke-width="1.7" stroke-linecap="round" stroke-linejoin="round"/><rect x="1534.3" y="745.2" width="14.7" height="14.7" rx="2.6" fill="#14c95c"/><path d="M1537.6 752.8 L1540.5 755.6 L1545.9 749.8" fill="none" stroke="#fff" stroke-width="1.7" stroke-linecap="round" stroke-linejoin="round"/><path d="M1541.5 776.1 L1549.0 789.1 L1534.0 789.1 Z" fill="#f5a623" stroke="#f5a623" stroke-width="1.2" stroke-linejoin="round"/><rect x="1540.7" y="780.1" width="1.7" height="5" fill="#2c2d4d"/><rect x="1540.7" y="786.1" width="1.7" height="1.7" fill="#2c2d4d"/><rect x="1534.3" y="805.0" width="14.7" height="14.7" rx="2.6" fill="#14c95c"/><path d="M1537.6 812.6 L1540.5 815.4 L1545.9 809.6" fill="none" stroke="#fff" stroke-width="1.7" stroke-linecap="round" stroke-linejoin="round"/><path d="M833.8 904.7 L838.1 900.5 L842.4 904.7 Z" fill="#5c5e8a"/><path d="M833.8 906.5 L838.1 910.7 L842.4 906.5 Z" fill="#5c5e8a"/><path d="M850.5 903.4 L854.5 907.4 L858.5 903.4" fill="none" stroke="#5c5e8a" stroke-width="1.45" stroke-linecap="round" stroke-linejoin="round"/><path d="M914.3 904.7 L918.6 900.5 L922.9 904.7 Z" fill="#5c5e8a"/><path d="M914.3 906.5 L918.6 910.7 L922.9 906.5 Z" fill="#5c5e8a"/><path d="M931.0 903.4 L935.0 907.4 L939.0 903.4" fill="none" stroke="#5c5e8a" stroke-width="1.45" stroke-linecap="round" stroke-linejoin="round"/><path d="M1048.8 904.7 L1053.1 900.5 L1057.4 904.7 Z" fill="#5c5e8a"/><path d="M1048.8 906.5 L1053.1 910.7 L1057.4 906.5 Z" fill="#5c5e8a"/><path d="M1065.5 903.4 L1069.5 907.4 L1073.5 903.4" fill="none" stroke="#5c5e8a" stroke-width="1.45" stroke-linecap="round" stroke-linejoin="round"/><path d="M1197.8 904.7 L1202.1 900.5 L1206.4 904.7 Z" fill="#5c5e8a"/><path d="M1197.8 906.5 L1202.1 910.7 L1206.4 906.5 Z" fill="#5c5e8a"/><path d="M1214.5 903.4 L1218.5 907.4 L1222.5 903.4" fill="none" stroke="#5c5e8a" stroke-width="1.45" stroke-linecap="round" stroke-linejoin="round"/><path d="M1548.8 904.7 L1553.1 900.5 L1557.4 904.7 Z" fill="#5c5e8a"/><path d="M1548.8 906.5 L1553.1 910.7 L1557.4 906.5 Z" fill="#5c5e8a"/><path d="M1565.5 903.4 L1569.5 907.4 L1573.5 903.4" fill="none" stroke="#5c5e8a" stroke-width="1.45" stroke-linecap="round" stroke-linejoin="round"/><path d="M1895.3 904.7 L1899.6 900.5 L1903.9 904.7 Z" fill="#5c5e8a"/><path d="M1895.3 906.5 L1899.6 910.7 L1903.9 906.5 Z" fill="#5c5e8a"/><path d="M1912.0 903.4 L1916.0 907.4 L1920.0 903.4" fill="none" stroke="#5c5e8a" stroke-width="1.45" stroke-linecap="round" stroke-linejoin="round"/><path d="M788.4 929.2 L801.6 942.4 M801.6 929.2 L788.4 942.4" stroke="#e8304f" stroke-width="2.6" stroke-linecap="round"/><path d="M130.8 1071.1 L135.1 1066.9 L139.4 1071.1 Z" fill="#5c5e8a"/><path d="M130.8 1072.9 L135.1 1077.1 L139.4 1072.9 Z" fill="#5c5e8a"/><path d="M147.5 1069.8 L151.5 1073.8 L155.5 1069.8" fill="none" stroke="#5c5e8a" stroke-width="1.45" stroke-linecap="round" stroke-linejoin="round"/><path d="M212.5 1071.1 L216.8 1066.9 L221.1 1071.1 Z" fill="#5c5e8a"/><path d="M212.5 1072.9 L216.8 1077.1 L221.1 1072.9 Z" fill="#5c5e8a"/><path d="M229.2 1069.8 L233.2 1073.8 L237.2 1069.8" fill="none" stroke="#5c5e8a" stroke-width="1.45" stroke-linecap="round" stroke-linejoin="round"/><path d="M425.0 1071.1 L429.3 1066.9 L433.6 1071.1 Z" fill="#5c5e8a"/><path d="M425.0 1072.9 L429.3 1077.1 L433.6 1072.9 Z" fill="#5c5e8a"/><path d="M441.7 1069.8 L445.7 1073.8 L449.7 1069.8" fill="none" stroke="#5c5e8a" stroke-width="1.45" stroke-linecap="round" stroke-linejoin="round"/><path d="M693.8 1071.1 L698.1 1066.9 L702.4 1071.1 Z" fill="#5c5e8a"/><path d="M693.8 1072.9 L698.1 1077.1 L702.4 1072.9 Z" fill="#5c5e8a"/><path d="M710.5 1069.8 L714.5 1073.8 L718.5 1069.8" fill="none" stroke="#5c5e8a" stroke-width="1.45" stroke-linecap="round" stroke-linejoin="round"/><path d="M989.8 1071.1 L994.1 1066.9 L998.4 1071.1 Z" fill="#5c5e8a"/><path d="M989.8 1072.9 L994.1 1077.1 L998.4 1072.9 Z" fill="#5c5e8a"/><path d="M1006.5 1069.8 L1010.5 1073.8 L1014.5 1069.8" fill="none" stroke="#5c5e8a" stroke-width="1.45" stroke-linecap="round" stroke-linejoin="round"/></svg>
<div class="b" style="left:0px;top:264px;width:4px;height:24px;background:#4b4fd8;border-radius:0 3px 3px 0;"></div>
<svg class="b" style="left:0px;top:0px;" width="1968" height="1108" viewBox="0 0 1968 1108"><path d="M18.5 26.4 L26.2 19.8 L37.5 21 L39.2 22.4 L39.2 33 L31.7 40.3 L20.6 39.2 L18.6 37.2 Z" fill="#2c2d4d"/><rect x="24.4" y="26.8" width="8" height="6.9" fill="#e4e4ee"/><path d="M18.4 26.6 H24.6 M32.4 26.8 L38.8 21.3 M24.4 33.7 L19.2 38.4 M32.4 33.6 V40.5" stroke="#e4e4ee" stroke-width="1"/><circle cx="26.2" cy="68.3" r="6" fill="none" stroke="#2c2d4d" stroke-width="1.9"/><path d="M30.7 73 L36 78.5" stroke="#2c2d4d" stroke-width="2.1" stroke-linecap="round"/><circle cx="28.4" cy="111" r="8.6" fill="none" stroke="#2c2d4d" stroke-width="2"/><circle cx="27.6" cy="111.5" r="4.6" fill="none" stroke="#2c2d4d" stroke-width="1.6"/><circle cx="27.6" cy="111.5" r="1.5" fill="#2c2d4d"/><rect x="30" y="113.5" width="7.4" height="6" rx="1.2" fill="#e4e4ee" stroke="#2c2d4d" stroke-width="1.4"/><circle cx="21.9" cy="146.3" r="1.9" fill="#2c2d4d"/><circle cx="28.6" cy="146.3" r="1.9" fill="#2c2d4d"/><circle cx="35.4" cy="146.3" r="1.9" fill="#2c2d4d"/><circle cx="21.9" cy="153.2" r="1.9" fill="#2c2d4d"/><circle cx="28.6" cy="153.2" r="1.9" fill="#2c2d4d"/><circle cx="35.4" cy="153.2" r="1.9" fill="#2c2d4d"/><circle cx="21.9" cy="159.9" r="1.9" fill="#2c2d4d"/><circle cx="28.6" cy="159.9" r="1.9" fill="#2c2d4d"/><circle cx="35.4" cy="159.9" r="1.9" fill="#2c2d4d"/><path d="M18.5 229.3 L28.4 223.8 L30.5 224.9 L21.3 230.5 L21.3 241 L18.5 239.6 Z" fill="#6b5be6"/><path d="M23 232 L32.6 226.6 L34.5 227.6 L25.6 233 L25.6 243.3 L23 242 Z" fill="#6b5be6"/><path d="M29.2 235.6 L38.2 230.4 L38.2 240 L29.2 245.4 Z" fill="#e9e9f3" stroke="#7d7f99" stroke-width="1.3"/><path d="M26.7 234.4 L36.3 229 L38.4 230.3 L29.2 235.6 L29.2 246.2 L26.7 244.8 Z" fill="#6b5be6"/><g transform="translate(17.8 266.2) scale(1.18)"><rect x="5.8" y="0" width="11.5" height="8" fill="#2d9a83"/><rect x="0" y="4" width="13" height="12" fill="#5cc3ad"/><rect x="9.5" y="9.5" width="8.8" height="8" fill="#2f9e86"/><path d="M0 11 L4.5 7 L8 10 L16.5 2.5" fill="none" stroke="#fff" stroke-width="1.3"/><rect x="3" y="11" width="1.6" height="4" fill="#d8f2ec"/><rect x="6.5" y="10" width="1.6" height="5" fill="#d8f2ec"/><circle cx="13.5" cy="13.5" r="2.5" fill="#7fd6c3"/></g><g transform="translate(75.9 17.3) scale(1.0)"><rect x="5.8" y="0" width="11.5" height="8" fill="#2d9a83"/><rect x="0" y="4" width="13" height="12" fill="#5cc3ad"/><rect x="9.5" y="9.5" width="8.8" height="8" fill="#2f9e86"/><path d="M0 11 L4.5 7 L8 10 L16.5 2.5" fill="none" stroke="#fff" stroke-width="1.3"/><rect x="3" y="11" width="1.6" height="4" fill="#d8f2ec"/><rect x="6.5" y="10" width="1.6" height="5" fill="#d8f2ec"/><circle cx="13.5" cy="13.5" r="2.5" fill="#7fd6c3"/></g><rect x="19.6" y="308.3" width="18" height="17.7" rx="4" fill="#4a74e0"/><rect x="21.2" y="309.9" width="14.8" height="14.5" rx="3" fill="#2e58c8"/><path d="M26.7 314.2 H31.2 M31.9 315.8 V318.8 M27.4 320.2 H31" stroke="#e0a040" stroke-width="1.1"/><path d="M24 312.6 L27 314.2 L24 315.8 Z M27.4 318.4 L24 320.2 L27.4 322 Z" fill="#fff"/><circle cx="32.4" cy="314.2" r="1.6" fill="#fff"/><circle cx="32.3" cy="320.2" r="1.7" fill="#fff"/><path d="M18.8 362.5 L25.5 357.8 L32 363.5 L25.5 368.6 Z" fill="#50568a" opacity="0.6"/><path d="M21.2 355.2 L29.8 350.8" stroke="#3d6be0" stroke-width="5.4" stroke-linecap="round"/><path d="M25.3 358.3 L37.2 352.2 L37.2 364.6 Z" fill="#2f7d6a" stroke="#6fd0b5" stroke-width="1.6" stroke-linejoin="round"/><circle cx="28.4" cy="358.2" r="1.9" fill="#fff"/><path d="M20.5 440 C20.5 434 25 430.8 31 430.8 L38 430.8 L38 438 C38 444.5 33.5 449 28.5 449 L22 449 L20 450.5 L21.8 447.5 C20.8 445.5 20.5 443 20.5 440 Z" fill="#2e8a6a" stroke="#62c39e" stroke-width="1"/><text x="29" y="442.5" font-family="Liberation Sans" font-size="6" font-weight="700" fill="#e8f5ef" text-anchor="middle">CO₂</text><ellipse cx="30" cy="486.5" rx="9" ry="4" fill="#d9dded"/><circle cx="23.8" cy="484.5" r="5.6" fill="#f7f8fc"/><circle cx="29.5" cy="483" r="4.2" fill="#eef0f8"/><circle cx="34.5" cy="486" r="3.6" fill="#e6e9f5"/><rect x="31" y="473.6" width="4.3" height="2.9" rx="1.4" fill="#c2309a"/><rect x="31" y="478.5" width="4.3" height="3.1" rx="1.5" fill="#c2309a"/><rect x="35.8" y="472" width="3" height="3" fill="#5b8ef0"/><rect x="35.8" y="476.3" width="3" height="3" fill="#5b8ef0"/><rect x="35.8" y="480.6" width="3" height="3" fill="#5b8ef0"/><path d="M28.5 511.5 L38 516.5 L38 528 L28.5 533.2 L19 528 L19 516.5 Z" fill="#4fb3a0"/><path d="M19 516.5 L28.5 521.5 L38 516.5 M28.5 521.5 V533.2 M23.7 514 V530.6 M33.3 514 V530.6 M19 522.2 L28.5 527.2 L38 522.2" fill="none" stroke="#2c8f7c" stroke-width="0.7"/><path d="M24.5 519.5 L28.5 517.5 L32.5 519.5 L32.5 525.5 L28.5 527.5 L24.5 525.5 Z" fill="#e0506e"/><circle cx="28.5" cy="563" r="8.3" fill="none" stroke="#8a90b5" stroke-width="3" stroke-dasharray="2.2 4.3"/><circle cx="28.5" cy="563" r="6.7" fill="none" stroke="#5d6690" stroke-width="2.6"/><circle cx="28.5" cy="563" r="3" fill="none" stroke="#5d6690" stroke-width="1.5"/><rect x="19.3" y="594.9" width="8" height="8" rx="1.5" fill="#2f66d8"/><rect x="29.6" y="594.9" width="8.5" height="8" rx="1.5" fill="#3a72e0"/><rect x="19.3" y="605.3" width="8" height="8" rx="1.5" fill="#2f66d8"/><circle cx="31" cy="607" r="1.8" fill="#e0405a"/><circle cx="36.2" cy="607" r="1.6" fill="#3a72e0"/><circle cx="31" cy="612" r="1.6" fill="#3a72e0"/><circle cx="36.2" cy="612" r="1.6" fill="#3a72e0"/><path d="M23.6 971.8 L29 977.4 L23.6 983 M29.6 971.8 L35 977.4 L29.6 983" fill="none" stroke="#2c2d4d" stroke-width="1.7"/><circle cx="28.4" cy="1009.6" r="7.3" fill="none" stroke="#2c2d4d" stroke-width="1.7"/><circle cx="28.4" cy="1009.6" r="3.6" fill="none" stroke="#2c2d4d" stroke-width="1.6"/><path d="M22.7 1004 L25.8 1007 M34.1 1004 L31 1007 M22.7 1015.2 L25.8 1012.2 M34.1 1015.2 L31 1012.2" stroke="#2c2d4d" stroke-width="1.5"/><path d="M22.2 1036 V1049.5 H36" fill="none" stroke="#2c2d4d" stroke-width="1.6"/><path d="M22.5 1038 L26 1041 L30 1038.5 L35.5 1035.8" fill="none" stroke="#2c2d4d" stroke-width="1.4"/><rect x="25.2" y="1041.5" width="1.9" height="6" fill="#2c2d4d"/><rect x="29" y="1043" width="1.9" height="4.5" fill="#2c2d4d"/><rect x="32.8" y="1040.5" width="1.9" height="7" fill="#2c2d4d"/><circle cx="28.4" cy="1079.5" r="9.1" fill="#545a8c"/><text x="28.4" y="1084.2" font-family="Liberation Sans" font-size="12.5" font-weight="700" fill="#fff" text-anchor="middle">G</text><path d="M212.2 26.2 H225.8 M219 19.5 V32.9" stroke="#2c2d4d" stroke-width="1.6"/><circle cx="1941.3" cy="26" r="7.6" fill="none" stroke="#2c2d4d" stroke-width="1.7"/><path d="M1938.4 23.2 C1938.4 21 1940 20.2 1941.3 20.2 C1943 20.2 1944.4 21.3 1944.4 23 C1944.4 25 1941.4 25.5 1941.3 28" fill="none" stroke="#2c2d4d" stroke-width="1.6"/><rect x="1940.4" y="29.5" width="1.8" height="1.8" fill="#2c2d4d"/><rect x="86.8" y="76.8" width="13" height="13" rx="1" fill="none" stroke="#2c2d4d" stroke-width="1.5"/><path d="M91 77 V79 M91 81.5 V82.5 M91 85.5 V86.5 M91 88.8 V90" stroke="#2c2d4d" stroke-width="1.5"/><path d="M94.4 80.6 L97 83.3 L94.4 86" fill="none" stroke="#2c2d4d" stroke-width="1.5"/><path d="M342 81 L346.3 85.3 L350.6 81" fill="none" stroke="#2c2d4d" stroke-width="1.6"/><path d="M381 88.3 C377.5 88.3 375.8 86 375.8 84 C375.8 82 377.2 80.5 379 80.3 C379.8 78.5 381.5 77.6 383.4 77.6 C386 77.6 388 79.4 388.4 81.8 L389.8 82.5" fill="none" stroke="#5c5e85" stroke-width="1.6" stroke-linecap="round"/><path d="M383.5 85 L386 87.8 L391.5 82" fill="none" stroke="#5c5e85" stroke-width="1.7" stroke-linecap="round"/><path d="M412.5 83.3 C415 79.2 417.5 77.6 420.3 77.6 C423 77.6 425.6 79.2 428 83.3 C425.6 87.4 423 89 420.3 89 C417.5 89 415 87.4 412.5 83.3 Z" fill="none" stroke="#4a4fd6" stroke-width="1.6"/><circle cx="420.3" cy="83.3" r="2.3" fill="#4a4fd6"/><path d="M1846.3 81.2 L1850.5 85.4 L1854.7 81.2" fill="none" stroke="#2c2d4d" stroke-width="1.6"/><path d="M1900.8 79.5 C1899.5 77.8 1897.6 77 1895.6 77 C1891.9 77 1889.2 80 1889.2 83.5 C1889.2 87.2 1892 90 1895.6 90 C1898.6 90 1901 88 1901.8 85.3" fill="none" stroke="#2c2d4d" stroke-width="1.6"/><path d="M1902.2 76.2 V80.8 H1897.6 Z" fill="#2c2d4d"/><path d="M1927 80 L1933.2 86.2 L1939.4 80" fill="none" stroke="#2c2d4d" stroke-width="1.7"/><path d="M104 152 H107.5 L110 165 H124.5" fill="none" stroke="#9a9a9a" stroke-width="1.6"/><path d="M107.5 153.5 H126.5 L124.8 163.5 H109.5 Z" fill="#d8d8d8" stroke="#a0a0a0" stroke-width="1"/><path d="M112 153.5 V163.5 M116.5 153.5 V163.5 M121 153.5 V163.5 M108.5 157 H125.8 M109 160.3 H125.2" stroke="#a8a8a8" stroke-width="0.8"/><path d="M126.5 153.5 L128 150" stroke="#9a9a9a" stroke-width="1.4"/><circle cx="127.9" cy="149.6" r="1.2" fill="#1e88e5"/><path d="M109.5 165 C107.5 166 107.5 168 109.5 168.5 H124.5" fill="none" stroke="#a0a0a0" stroke-width="1.4"/><circle cx="110" cy="171" r="1.6" fill="#1e88e5"/><circle cx="123" cy="171" r="1.6" fill="#1e88e5"/><rect x="813.2" y="149.6" width="11" height="23" rx="4" fill="#2b2b2b"/><circle cx="818.7" cy="154.6" r="2.2" fill="#e53935"/><circle cx="818.7" cy="161" r="2.2" fill="#fbc02d"/><circle cx="818.7" cy="167.5" r="2.2" fill="#2fbf4f"/><path d="M1956 115 L1960.5 108.3 L1965 115 Z" fill="#d5d5e1"/><path d="M1956 1077 L1960.5 1084 L1965 1077 Z" fill="#d5d5e1"/><path d="M1922.3 1072.8 L1926.7 1065.8 L1931 1072.8 Z" fill="#d5d5e1"/><path d="M1922.2 1092 V1085 A4.5 4.5 0 0 1 1931.2 1085 V1092 Z" fill="#d5d5e1"/></svg>
</body></html>
